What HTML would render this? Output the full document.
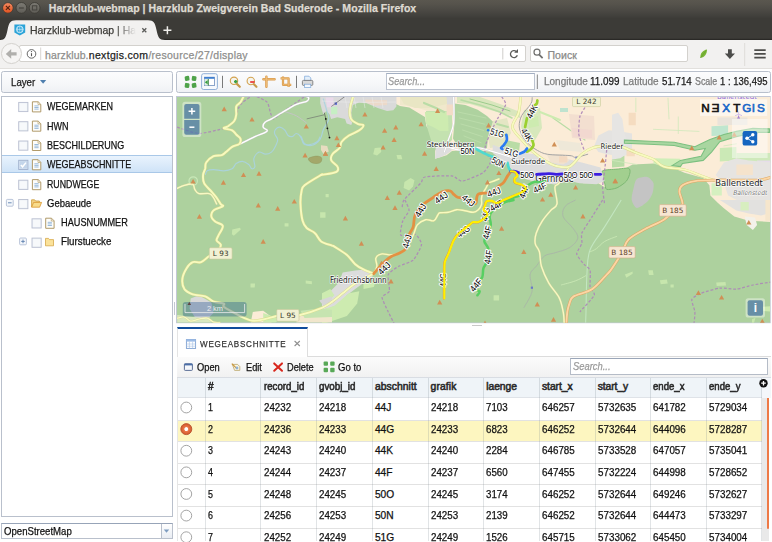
<!DOCTYPE html>
<html lang="en"><head><meta charset="utf-8"><title>Harzklub-webmap | Harzklub Zweigverein Bad Suderode</title>
<style>
*{box-sizing:border-box;margin:0;padding:0}
html,body{width:772px;height:542px;overflow:hidden;background:#fff;font-family:"Liberation Sans",sans-serif}
#root{position:relative;width:772px;height:542px;overflow:hidden;background:#fff}
.a{position:absolute}
.t{position:absolute;white-space:pre;-webkit-text-stroke:0.25px currentColor}
svg{position:absolute;left:0;top:0}
</style></head>
<body><div id="root">
<div class="a" style="left:0;top:0;width:772px;height:40px;background:linear-gradient(#5a574f 0px,#56534c 4px,#4b4944 10.5px,#403f3b 16.5px,#3c3b37 18.5px,#3c3b37 38.2px,#2a2926 39.3px,#2a2926 40px)"></div>
<svg width="772" height="70" viewBox="0 0 772 70">
<defs>
<linearGradient id="gc" x1="0" y1="0" x2="0" y2="1"><stop offset="0" stop-color="#f58b62"/><stop offset="1" stop-color="#e2521f"/></linearGradient>
<linearGradient id="gg" x1="0" y1="0" x2="0" y2="1"><stop offset="0" stop-color="#7d7b74"/><stop offset="1" stop-color="#5e5c56"/></linearGradient>
</defs>
<circle cx="7.9" cy="7.9" r="5.3" fill="url(#gc)" stroke="#3a3832" stroke-width="0.8"/>
<path d="M5.9 5.9 L9.9 9.9 M9.9 5.9 L5.9 9.9" stroke="#5a2410" stroke-width="1.2" fill="none"/>
<circle cx="21.4" cy="7.9" r="5.4" fill="url(#gg)" stroke="#3a3832" stroke-width="0.8"/>
<path d="M19 8 H23.8" stroke="#45433e" stroke-width="1.2"/>
<circle cx="34.6" cy="7.9" r="5.4" fill="url(#gg)" stroke="#3a3832" stroke-width="0.8"/>
<rect x="32.4" y="5.8" width="4.4" height="4.2" fill="none" stroke="#45433e" stroke-width="1"/>
<!-- active tab -->
<path d="M0 40 C5 40 6 37 7.5 30 C9 23 10 20.3 16 20.3 L148 20.3 C154 20.3 155 23 156.5 30 C158 37 159 40 165 40 Z" fill="#f2f1f0"/>
<!-- favicon -->
<path d="M14.4 24.6 H25.2 V32.6 L19.8 35.4 L14.4 32.6 Z" fill="#2aa3d8"/>
<circle cx="19.8" cy="29.4" r="3.4" fill="none" stroke="#d9f0fb" stroke-width="0.8"/>
<path d="M16.4 29.4 H23.2 M19.8 26 V32.8 M18 26.6 Q16.6 29.4 18 32.2 M21.6 26.6 Q23 29.4 21.6 32.2" fill="none" stroke="#d9f0fb" stroke-width="0.6"/>
<!-- tab close -->
<path d="M142.3 28.3 L146.3 32.3 M146.3 28.3 L142.3 32.3" stroke="#5c5c5a" stroke-width="1.3" fill="none"/>
<!-- new tab plus -->
<path d="M163.4 30.3 H171.4 M167.4 26.3 V34.3" stroke="#f0efec" stroke-width="1.5" fill="none"/>
</svg>
<div class="a" style="left:0;top:40px;width:772px;height:29px;background:#f2f1f0;border-bottom:1px solid #e2e0dd"></div>
<div class="a" style="left:19px;top:45px;width:507px;height:17px;background:#fff;border:1px solid #d3d1cd;border-radius:2px"></div>
<div class="a" style="left:0.8px;top:43.2px;width:20.8px;height:20.8px;background:#f6f5f4;border:1px solid #d3d1cd;border-radius:50%"></div>
<div class="a" style="left:530px;top:45px;width:158px;height:17px;background:#fff;border:1px solid #d3d1cd;border-radius:2px"></div>
<svg width="772" height="70" viewBox="0 0 772 70">
<!-- back arrow -->
<path d="M5.8 53.9 L11.2 49 V52.2 H16.6 V55.6 H11.2 V58.8 Z" fill="#b0afac"/>
<!-- info -->
<circle cx="31.5" cy="53.9" r="4.3" fill="none" stroke="#555" stroke-width="0.9"/>
<path d="M31.5 53.2 V56.2" stroke="#555" stroke-width="1.1"/><circle cx="31.5" cy="51.6" r="0.65" fill="#555"/>
<path d="M40.7 47.5 V60" stroke="#d8d6d2" stroke-width="1"/>
<path d="M502.8 48 V59.5" stroke="#cfcdca" stroke-width="1"/>
<!-- reload -->
<path d="M516.4 51.6 A3.5 3.5 0 1 0 517.3 55.2" fill="none" stroke="#5a5a58" stroke-width="1.3"/>
<path d="M514.2 52.8 H518 V49 Z" fill="#5a5a58"/>
<!-- magnifier -->
<circle cx="537" cy="52.2" r="3" fill="none" stroke="#6f6f6d" stroke-width="1.2"/>
<path d="M539.2 54.6 L542.6 58.2" stroke="#6f6f6d" stroke-width="1.7"/>
<!-- leaf -->
<path d="M700.4 58 C700 53 703 50 707 49.4 C707 53.6 705 57 700.4 58 Z" fill="#7ab536"/>
<path d="M700.4 58 L706 50.6" stroke="#5f9a28" stroke-width="0.5"/>
<!-- download -->
<path d="M728 49.2 H731.8 V53.4 H735 L729.9 59 L724.8 53.4 H728 Z" fill="#4c4c4a"/>
<path d="M744.7 43 V66" stroke="#dedcd9" stroke-width="1"/>
<!-- hamburger -->
<path d="M754.3 50.2 H765.7 M754.3 53.9 H765.7 M754.3 57.6 H765.7" stroke="#4c4c4a" stroke-width="1.7"/>
</svg>
<span class="t" style="left:48.80px;top:1.30px;font-size:10.5px;line-height:14px;font-weight:700;color:#dfdbd2;font-style:normal;letter-spacing:0.066px;">Harzklub-webmap | Harzklub Zweigverein Bad Suderode - Mozilla Firefox</span>
<span class="t" style="left:30.00px;top:23.30px;font-size:10.5px;line-height:14px;font-weight:400;color:#3c3b37;font-style:normal;letter-spacing:-0.030px;width:107px;overflow:hidden;-webkit-mask-image:linear-gradient(90deg,#000 85px,transparent 106px);mask-image:linear-gradient(90deg,#000 85px,transparent 106px);">Harzklub-webmap | Ha</span>
<span class="t" style="left:45.10px;top:47.50px;font-size:10.5px;line-height:14px;font-weight:400;color:#8e8e8c;font-style:normal;letter-spacing:0.099px;">harzklub.</span>
<span class="t" style="left:88.80px;top:47.50px;font-size:10.5px;line-height:14px;font-weight:400;color:#1e1e1e;font-style:normal;letter-spacing:0.315px;">nextgis.com</span>
<span class="t" style="left:148.40px;top:47.50px;font-size:10.5px;line-height:14px;font-weight:400;color:#8e8e8c;font-style:normal;letter-spacing:0.277px;">/resource/27/display</span>
<span class="t" style="left:547.40px;top:47.50px;font-size:10.5px;line-height:14px;font-weight:400;color:#8a8a88;font-style:normal;letter-spacing:0.098px;">Поиск</span>
<div class="a" style="left:1px;top:71px;width:172px;height:21.5px;border:1px solid #b9c0cc;border-radius:2.5px;background:linear-gradient(#fcfcfd,#f6f7f9 60%,#eff1f5)"></div>
<svg width="772" height="542" viewBox="0 0 772 542"><path d="M40 80 H46.2 L43.1 83.8 Z" fill="#4f7fae"/></svg>
<div class="a" style="left:176px;top:71px;width:594.5px;height:21.5px;border:1px solid #b9c0cc;border-radius:2.5px;background:linear-gradient(#fcfcfd,#f6f7f9 60%,#eff1f5)"></div>
<svg width="772" height="542" viewBox="0 0 772 542">
<!-- four green squares -->
<g fill="#4fa34a"><rect x="184.8" y="76" width="4.6" height="4.8" rx="1.2" transform="rotate(-8 187 78.4)"/><rect x="191.8" y="76" width="4.6" height="4.8" rx="1.2" transform="rotate(8 194 78.4)"/><rect x="184.8" y="83" width="4.6" height="4.8" rx="1.2" transform="rotate(8 187 85.4)"/><rect x="191.8" y="83" width="4.6" height="4.8" rx="1.2" transform="rotate(-8 194 85.4)"/></g>
<!-- toggle button -->
<rect x="201.6" y="73.7" width="15.8" height="15.8" rx="2" fill="#f6f9fd" stroke="#86a8d4" stroke-width="0.9"/>
<rect x="204.4" y="77.2" width="10" height="8.4" fill="#fff" stroke="#6f8fbf" stroke-width="0.8"/>
<rect x="204.4" y="77" width="10" height="1.8" fill="#3f7fd0"/>
<rect x="204.6" y="79" width="3.6" height="6.4" fill="#dfeede"/>
<path d="M208.3 79 V85.6" stroke="#2d7d32" stroke-width="0.9"/>
<path d="M204.8 82.2 L207.6 80.2 V84.2 Z" fill="#2f9a3a"/>
<path d="M222.5 75.8 V88" stroke="#6b6b6b" stroke-width="0.9"/>
<!-- zoom in -->
<path d="M236.6 83.6 L239.8 86.8" stroke="#c89a4c" stroke-width="2.2" stroke-linecap="round"/>
<circle cx="234" cy="80.8" r="3.7" fill="#f4f4ee" stroke="#d3a24e" stroke-width="1.1"/>
<path d="M234 81.6 H237.4 M235.7 79.9 V83.3" stroke="#3aa044" stroke-width="1.6"/>
<!-- zoom out -->
<path d="M253.4 83.8 L256.4 86.8" stroke="#c89a4c" stroke-width="2.2" stroke-linecap="round"/>
<circle cx="250.8" cy="81" r="3.7" fill="#f4f4ee" stroke="#d3a24e" stroke-width="1.1"/>
<path d="M250.2 82 H254.6" stroke="#e83535" stroke-width="1.7"/>
<!-- measure -->
<path d="M263.4 79.2 H274.6 M266.4 76.6 V86.8" stroke="#d99a4a" stroke-width="2.4" stroke-linecap="round" fill="none"/>
<path d="M263.4 79.2 H274.6 M266.4 76.6 V86.8" stroke="#f0bf7a" stroke-width="1" stroke-linecap="round" fill="none"/>
<!-- crop -->
<path d="M280.6 78.4 H288.6 V87 M283 76.6 V84.8 H291.2" stroke="#d99a4a" stroke-width="2.2" fill="none" stroke-linejoin="round"/>
<path d="M280.6 78.4 H288.6 V87 M283 76.6 V84.8 H291.2" stroke="#f0bf7a" stroke-width="0.8" fill="none"/>
<path d="M296.5 75.8 V88" stroke="#6b6b6b" stroke-width="0.9"/>
<!-- printer -->
<path d="M304.6 76.2 H309 L310.8 78 V81 H304.6 Z" fill="#e3effb" stroke="#7aa5d8" stroke-width="0.7"/>
<rect x="302.4" y="80.4" width="10.4" height="5" rx="1" fill="#d9d9d9" stroke="#6e6e6e" stroke-width="0.8"/>
<rect x="304.4" y="84.2" width="6.4" height="3.4" fill="#f4f8fd" stroke="#7aa5d8" stroke-width="0.7"/>
<path d="M537.4 74.5 V89" stroke="#9a9a9a" stroke-width="1.2"/>
</svg>
<div class="a" style="left:385.5px;top:72.5px;width:149.5px;height:17px;border:1px solid #bcc3cf;border-top-color:#a3afc2;background:#fff"></div>
<div class="a" style="left:1px;top:96px;width:172px;height:421px;border:1px solid #b9c0cc;background:#fff"></div>
<div class="a" style="left:2px;top:155px;width:170px;height:18.3px;background:linear-gradient(#e9f3fd,#cfe3f7);border-top:1px solid #a9c8e8;border-bottom:1px solid #a9c8e8"></div>
<svg width="772" height="542" viewBox="0 0 772 542">
<g transform="translate(18.2,101.89999999999999)"><rect x="0.5" y="0.5" width="9.2" height="9.2" fill="#eef2f7" stroke="#b9bfd0" stroke-width="0.9"/><rect x="1.6" y="1.6" width="7" height="7" fill="#f7f9fb"/></g>
<g transform="translate(31.8,101.3)"><path d="M0.6 0.5 H6.4 L9 3.1 V10.6 H0.6 Z" fill="#fdfdfb" stroke="#a8905a" stroke-width="0.9"/><path d="M6.2 0.6 V3.3 H8.9" fill="none" stroke="#b8a06a" stroke-width="0.7"/><path d="M2.6 4.6 H6.8 M2.6 6.2 H6.8 M2.6 7.8 H6.8" stroke="#8fb2d6" stroke-width="0.9"/></g>
<g transform="translate(18.2,121.19999999999999)"><rect x="0.5" y="0.5" width="9.2" height="9.2" fill="#eef2f7" stroke="#b9bfd0" stroke-width="0.9"/><rect x="1.6" y="1.6" width="7" height="7" fill="#f7f9fb"/></g>
<g transform="translate(31.8,120.6)"><path d="M0.6 0.5 H6.4 L9 3.1 V10.6 H0.6 Z" fill="#fdfdfb" stroke="#a8905a" stroke-width="0.9"/><path d="M6.2 0.6 V3.3 H8.9" fill="none" stroke="#b8a06a" stroke-width="0.7"/><path d="M2.6 4.6 H6.8 M2.6 6.2 H6.8 M2.6 7.8 H6.8" stroke="#8fb2d6" stroke-width="0.9"/></g>
<g transform="translate(18.2,140.5)"><rect x="0.5" y="0.5" width="9.2" height="9.2" fill="#eef2f7" stroke="#b9bfd0" stroke-width="0.9"/><rect x="1.6" y="1.6" width="7" height="7" fill="#f7f9fb"/></g>
<g transform="translate(31.8,139.9)"><path d="M0.6 0.5 H6.4 L9 3.1 V10.6 H0.6 Z" fill="#fdfdfb" stroke="#a8905a" stroke-width="0.9"/><path d="M6.2 0.6 V3.3 H8.9" fill="none" stroke="#b8a06a" stroke-width="0.7"/><path d="M2.6 4.6 H6.8 M2.6 6.2 H6.8 M2.6 7.8 H6.8" stroke="#8fb2d6" stroke-width="0.9"/></g>
<g transform="translate(18.2,159.8)"><rect x="0.5" y="0.5" width="9.2" height="9.2" fill="#dfe9f5" stroke="#9fb0cc" stroke-width="0.9"/><rect x="1.4" y="1.4" width="7.4" height="7.4" fill="#c3d5ea"/><path d="M2.6 5.2 L4.4 7 L7.8 2.8" fill="none" stroke="#fff" stroke-width="1.5"/></g>
<g transform="translate(31.8,159.20000000000002)"><path d="M0.6 0.5 H6.4 L9 3.1 V10.6 H0.6 Z" fill="#fdfdfb" stroke="#a8905a" stroke-width="0.9"/><path d="M6.2 0.6 V3.3 H8.9" fill="none" stroke="#b8a06a" stroke-width="0.7"/><path d="M2.6 4.6 H6.8 M2.6 6.2 H6.8 M2.6 7.8 H6.8" stroke="#8fb2d6" stroke-width="0.9"/></g>
<g transform="translate(18.2,179.7)"><rect x="0.5" y="0.5" width="9.2" height="9.2" fill="#eef2f7" stroke="#b9bfd0" stroke-width="0.9"/><rect x="1.6" y="1.6" width="7" height="7" fill="#f7f9fb"/></g>
<g transform="translate(31.8,179.1)"><path d="M0.6 0.5 H6.4 L9 3.1 V10.6 H0.6 Z" fill="#fdfdfb" stroke="#a8905a" stroke-width="0.9"/><path d="M6.2 0.6 V3.3 H8.9" fill="none" stroke="#b8a06a" stroke-width="0.7"/><path d="M2.6 4.6 H6.8 M2.6 6.2 H6.8 M2.6 7.8 H6.8" stroke="#8fb2d6" stroke-width="0.9"/></g>
<g transform="translate(18.2,199.0)"><rect x="0.5" y="0.5" width="9.2" height="9.2" fill="#eef2f7" stroke="#b9bfd0" stroke-width="0.9"/><rect x="1.6" y="1.6" width="7" height="7" fill="#f7f9fb"/></g>
<g transform="translate(31.0,198.4)"><path d="M0.6 8.6 V1.4 H3.6 L4.6 2.6 H8.4 V4" fill="#f3d48a" stroke="#c99a3a" stroke-width="0.8"/><path d="M0.6 8.8 L2.6 4 H10.6 L8.6 8.8 Z" fill="#f8dc8c" stroke="#d9962e" stroke-width="0.8"/></g>
<rect x="6.4" y="199.40" width="6.8" height="6.8" rx="1" fill="#f4f7fb" stroke="#aab8d0" stroke-width="0.8"/><path d="M8 202.80 H11.6" stroke="#5b7fae" stroke-width="0.9"/>
<g transform="translate(31.5,218.3)"><rect x="0.5" y="0.5" width="9.2" height="9.2" fill="#eef2f7" stroke="#b9bfd0" stroke-width="0.9"/><rect x="1.6" y="1.6" width="7" height="7" fill="#f7f9fb"/></g>
<g transform="translate(45.1,217.70000000000002)"><path d="M0.6 0.5 H6.4 L9 3.1 V10.6 H0.6 Z" fill="#fdfdfb" stroke="#a8905a" stroke-width="0.9"/><path d="M6.2 0.6 V3.3 H8.9" fill="none" stroke="#b8a06a" stroke-width="0.7"/><path d="M2.6 4.6 H6.8 M2.6 6.2 H6.8 M2.6 7.8 H6.8" stroke="#8fb2d6" stroke-width="0.9"/></g>
<g transform="translate(31.5,237.6)"><rect x="0.5" y="0.5" width="9.2" height="9.2" fill="#eef2f7" stroke="#b9bfd0" stroke-width="0.9"/><rect x="1.6" y="1.6" width="7" height="7" fill="#f7f9fb"/></g>
<g transform="translate(44.900000000000006,237.2)"><path d="M0.6 8.6 V1.2 H3.6 L4.6 2.4 H8.6 V8.6 Z" fill="#fbe29a" stroke="#d5a84a" stroke-width="0.8" stroke-linejoin="round"/></g>
<rect x="19.6" y="238.00" width="6.8" height="6.8" rx="1" fill="#f4f7fb" stroke="#aab8d0" stroke-width="0.8"/><path d="M21.2 241.40 H24.8 M23 239.60 V243.20" stroke="#5b7fae" stroke-width="0.9"/>
</svg>
<div class="a" style="left:174px;top:302px;width:1px;height:13px;background:#c3c8d2"></div>
<div class="a" style="left:1px;top:523px;width:172px;height:15.6px;border:1px solid #b9c0cc;border-top-color:#97a4b8;background:#fff"></div>
<div class="a" style="left:160.5px;top:524px;width:11.5px;height:13.6px;border-left:1px solid #b9c0cc;background:linear-gradient(#fff,#e9edf3)"></div>
<svg width="772" height="542" viewBox="0 0 772 542"><path d="M163.8 529.6 H169.2 L166.5 532.8 Z" fill="#7d9cc0"/></svg>
<span class="t" style="left:10.80px;top:74.80px;font-size:10.5px;line-height:14px;font-weight:400;color:#1a1a1a;font-style:normal;transform:scaleX(0.9214);transform-origin:0 50%;">Layer</span>
<span class="t" style="left:388.40px;top:74.20px;font-size:10.5px;line-height:14px;font-weight:400;color:#9a9a9a;font-style:italic;transform:scaleX(0.8803);transform-origin:0 50%;">Search...</span>
<span class="t" style="left:544.00px;top:74.30px;font-size:10.5px;line-height:14px;font-weight:400;color:#7a7a7a;font-style:normal;transform:scaleX(0.9493);transform-origin:0 50%;">Longitude</span>
<span class="t" style="left:590.30px;top:74.30px;font-size:10.5px;line-height:14px;font-weight:400;color:#1a1a1a;font-style:normal;transform:scaleX(0.9412);transform-origin:0 50%;">11.099</span>
<span class="t" style="left:623.10px;top:74.30px;font-size:10.5px;line-height:14px;font-weight:400;color:#7a7a7a;font-style:normal;transform:scaleX(0.9552);transform-origin:0 50%;">Latitude</span>
<span class="t" style="left:661.90px;top:74.30px;font-size:10.5px;line-height:14px;font-weight:400;color:#1a1a1a;font-style:normal;transform:scaleX(0.9276);transform-origin:0 50%;">51.714</span>
<span class="t" style="left:694.70px;top:74.30px;font-size:10.5px;line-height:14px;font-weight:400;color:#7a7a7a;font-style:normal;transform:scaleX(0.8452);transform-origin:0 50%;">Scale</span>
<span class="t" style="left:719.80px;top:74.30px;font-size:10.5px;line-height:14px;font-weight:400;color:#1a1a1a;font-style:normal;transform:scaleX(0.9040);transform-origin:0 50%;">1 : 136,495</span>
<span class="t" style="left:47.10px;top:99.30px;font-size:10.5px;line-height:14px;font-weight:400;color:#111;font-style:normal;transform:scaleX(0.8557);transform-origin:0 50%;">WEGEMARKEN</span>
<span class="t" style="left:47.10px;top:118.60px;font-size:10.5px;line-height:14px;font-weight:400;color:#111;font-style:normal;transform:scaleX(0.8573);transform-origin:0 50%;">HWN</span>
<span class="t" style="left:47.10px;top:137.90px;font-size:10.5px;line-height:14px;font-weight:400;color:#111;font-style:normal;transform:scaleX(0.8547);transform-origin:0 50%;">BESCHILDERUNG</span>
<span class="t" style="left:47.10px;top:157.20px;font-size:10.5px;line-height:14px;font-weight:400;color:#111;font-style:normal;transform:scaleX(0.8550);transform-origin:0 50%;">WEGEABSCHNITTE</span>
<span class="t" style="left:47.10px;top:176.50px;font-size:10.5px;line-height:14px;font-weight:400;color:#111;font-style:normal;transform:scaleX(0.8378);transform-origin:0 50%;">RUNDWEGE</span>
<span class="t" style="left:47.10px;top:195.80px;font-size:10.5px;line-height:14px;font-weight:400;color:#111;font-style:normal;transform:scaleX(0.9032);transform-origin:0 50%;">Gebaeude</span>
<span class="t" style="left:60.70px;top:215.10px;font-size:10.5px;line-height:14px;font-weight:400;color:#111;font-style:normal;transform:scaleX(0.8741);transform-origin:0 50%;">HAUSNUMMER</span>
<span class="t" style="left:60.70px;top:234.40px;font-size:10.5px;line-height:14px;font-weight:400;color:#111;font-style:normal;transform:scaleX(0.9285);transform-origin:0 50%;">Flurstuecke</span>
<span class="t" style="left:3.90px;top:523.70px;font-size:10.5px;line-height:14px;font-weight:400;color:#111;font-style:normal;transform:scaleX(0.9145);transform-origin:0 50%;">OpenStreetMap</span>
<svg width="772" height="542" viewBox="0 0 772 542" font-family="'DejaVu Sans','Liberation Sans',sans-serif">
<defs><clipPath id="mc"><rect x="177" y="97" width="593.2" height="225.7"/></clipPath></defs>
<rect x="176" y="96" width="594.7" height="227.2" fill="#c3c8d6"/>
<g clip-path="url(#mc)">
<rect x="177" y="97" width="593.2" height="225.7" fill="#add19e"/>
<path d="M396.0 95.0 L772.0 95.0 L772.0 222.0 L748.8 220.7 L734.3 216.6 L723.9 208.3 L718.0 203.0 L710.4 195.6 L709.4 185.3 L703.2 178.0 L684.5 172.8 L670.0 166.6 L653.5 163.5 L632.7 164.5 L624.4 168.7 L612.0 172.8 L604.6 187.3 L598.4 183.2 L583.9 183.2 L569.4 181.1 L554.9 184.2 L540.4 183.2 L525.9 179.0 L513.5 170.8 L507.2 164.5 L492.7 152.0 L484.0 151.0 L476.0 149.5 L459.0 150.5 L452.0 151.0 L446.6 155.2 L435.0 158.8 L435.0 151.0 L439.0 145.0 L440.4 138.6 L438.9 132.4 L431.0 132.4 L426.4 126.2 L424.9 116.9 L417.1 112.2 L409.3 107.5 L400.0 106.0 L396.0 104.0 Z" fill="#fbecd7"/>
<path d="M454.5 103.5 L465.3 105.0 L477.7 109.7 L487.0 115.9 L493.3 122.1 L491.0 128.0 L488.0 137.1 L487.0 148.0 L476.2 147.5 L459.0 148.5 L453.0 138.6 L454.5 123.1 Z" fill="#aed29f"/>
<path d="M426.0 111.0 L452.0 111.0 L452.0 140.0 L445.0 147.0 L437.0 148.0 L431.0 140.0 L427.0 127.0 Z" fill="#c4e2b0"/>
<path d="M400.0 97.0 L452.0 97.0 L452.0 111.0 L428.0 111.0 L418.0 108.0 L408.0 106.0 L400.0 105.0 Z" fill="#f0e8cc"/>
<path d="M424.9 112.0 L448.0 112.0 L448.5 131.0 L440.0 131.0 L433.0 127.0 L426.0 124.0 Z" fill="#cdebb0" fill-opacity="1"/>
<path d="M400.0 97.0 L447.0 97.0 L447.0 104.0 L430.0 108.0 L415.0 108.0 L404.0 104.0 Z" fill="#e9e6c4" fill-opacity="1"/>
<path d="M457.0 97.0 L480.0 97.0 L500.0 104.0 L520.0 112.0 L520.0 118.0 L497.0 112.0 L470.0 104.0 L457.0 103.0 Z" fill="#d9e6bd" fill-opacity="1"/>
<path d="M424.0 103.0 L436.0 108.0 L444.0 112.0" fill="none" stroke="#b9dca6" stroke-width="2.2" stroke-opacity="1" stroke-linecap="round"/>
<path d="M461.0 100.0 L480.0 105.0 L500.0 112.0 L512.0 118.0" fill="none" stroke="#b9dca6" stroke-width="1.6" stroke-opacity="1" stroke-linecap="round"/>
<path d="M470.0 99.0 L492.0 105.0 L510.0 111.0" fill="none" stroke="#9ccb8c" stroke-width="1.0" stroke-opacity="1" stroke-linecap="round"/>
<path d="M458.0 112.0 L486.0 118.0" fill="none" stroke="#bfdfae" stroke-width="0.9" stroke-opacity="0.8" stroke-linecap="round"/>
<path d="M459.5 118.0 L484.8 124.2" fill="none" stroke="#bfdfae" stroke-width="0.9" stroke-opacity="0.8" stroke-linecap="round"/>
<path d="M461.0 124.0 L483.6 130.4" fill="none" stroke="#bfdfae" stroke-width="0.9" stroke-opacity="0.8" stroke-linecap="round"/>
<path d="M462.5 130.0 L482.4 136.6" fill="none" stroke="#bfdfae" stroke-width="0.9" stroke-opacity="0.8" stroke-linecap="round"/>
<path d="M464.0 136.0 L481.2 142.8" fill="none" stroke="#bfdfae" stroke-width="0.9" stroke-opacity="0.8" stroke-linecap="round"/>
<path d="M493.0 121.0 L507.0 118.0 L511.0 133.0 L504.0 146.0 L490.0 148.0 L488.0 137.0 Z" fill="#e4e6c4" fill-opacity="1"/>
<path d="M497.0 124.0 L508.0 127.0" fill="none" stroke="#b9dca6" stroke-width="2" stroke-opacity="1" stroke-linecap="round"/>
<path d="M495.0 132.0 L507.0 135.0" fill="none" stroke="#9ccb8c" stroke-width="1.6" stroke-opacity="1" stroke-linecap="round"/>
<path d="M505.0 140.0 L520.0 143.0 L519.0 152.0 L504.0 150.0 Z" fill="#b9dca6" fill-opacity="1"/>
<path d="M524.0 110.0 L540.0 108.0 L542.0 128.0 L534.0 142.0 L524.0 140.0 L521.0 126.0 Z" fill="#d7e8bc" fill-opacity="1"/>
<path d="M528.0 118.0 L538.0 116.0 L539.0 126.0 L529.0 128.0 Z" fill="#cdebb0" fill-opacity="1"/>
<path d="M553.0 118.0 L570.0 130.0 L585.0 140.0" fill="none" stroke="#b9dca6" stroke-width="1.2" stroke-opacity="1" stroke-linecap="round"/>
<path d="M540.0 112.0 L560.0 120.0" fill="none" stroke="#cdebb0" stroke-width="2" stroke-opacity="1" stroke-linecap="round"/>
<path d="M560.0 108.0 L568.0 108.0 L568.0 112.0 L560.0 112.0 Z" fill="#bfe3cf" fill-opacity="1"/>
<path d="M569.0 114.0 L594.0 116.0 L595.0 140.0 L572.0 138.0 Z" fill="#f3dfd0" fill-opacity="1"/>
<path d="M572.0 128.0 L592.0 130.0 L592.0 138.0 L573.0 137.0 Z" fill="#f1d6cf" fill-opacity="0.8"/>
<path d="M556.0 140.0 L580.0 143.0 L582.0 152.0 L560.0 150.0 Z" fill="#eee8d8" fill-opacity="1"/>
<path d="M612.0 154.2 L624.4 155.2 L624.4 166.6 L612.0 167.6 Z" fill="#b9dca6" fill-opacity="1"/>
<path d="M653.5 158.3 L680.4 158.7 L680.4 166.2 L663.8 167.0 L653.5 163.5 Z" fill="#cfeeb8" fill-opacity="1"/>
<path d="M711.5 126.2 L728.1 125.2 L728.1 135.5 L711.5 135.9 Z" fill="#bfe6cf" fill-opacity="1"/>
<path d="M719.8 148.0 L736.4 146.9 L736.4 160.4 L719.8 161.4 Z" fill="#cbe9b6" fill-opacity="1"/>
<path d="M736.4 153.1 L772.0 153.1 L772.0 162.5 L736.4 162.5 Z" fill="#cfe9bb" fill-opacity="1"/>
<path d="M757.1 160.4 L772.0 160.4 L772.0 170.8 L757.1 170.8 Z" fill="#e6dcea" fill-opacity="1"/>
<path d="M628.6 112.7 L635.8 112.7 L635.8 125.2 L628.6 125.2 Z" fill="#f5dcc0" fill-opacity="1"/>
<path d="M635.8 98.2 L635.8 111.7" fill="none" stroke="#cfe9bb" stroke-width="0.8" stroke-opacity="1" stroke-linecap="round"/>
<path d="M668.0 98.2 L669.0 118.9" fill="none" stroke="#cfe9bb" stroke-width="0.8" stroke-opacity="1" stroke-linecap="round"/>
<path d="M678.3 116.9 L678.3 133.5" fill="none" stroke="#cfe9bb" stroke-width="0.8" stroke-opacity="1" stroke-linecap="round"/>
<path d="M653.5 129.3 L699.0 131.4" fill="none" stroke="#cfe9bb" stroke-width="0.8" stroke-opacity="1" stroke-linecap="round"/>
<path d="M612.0 160.4 L636.9 164.5" fill="none" stroke="#cfe9bb" stroke-width="0.8" stroke-opacity="1" stroke-linecap="round"/>
<path d="M723.9 145.9 L736.4 143.8" fill="none" stroke="#cfe9bb" stroke-width="0.8" stroke-opacity="1" stroke-linecap="round"/>
<path d="M602.6 170.8 C604.6 169.7 613.6 169.4 617.1 169.1 C620.5 168.8 626.8 167.8 628.5 168.3 C630.2 168.8 630.2 171.1 629.9 172.8 C629.7 174.5 628.1 179.1 626.4 181.1 C624.7 183.1 619.7 186.6 617.1 187.8 C614.5 188.9 608.4 190.0 606.7 189.4 C605.1 188.8 605.3 184.8 604.6 183.2 C604.0 181.5 602.4 178.6 602.2 177.0 C601.9 175.3 600.6 171.8 602.6 170.8 Z" fill="#a2cf8f" stroke="#7db873" stroke-width="1"/>
<path d="M320.2 96.3 L396.4 96.3 L396.4 106.4 L393.3 110.3 L387.1 111.1 L377.7 108.0 L366.8 103.3 L359.1 102.5 L352.9 104.9 L351.3 112.7 L352.9 120.4 L351.3 125.1 L346.6 123.5 L345.1 118.9 L337.3 117.3 L331.1 118.9 L329.5 114.2 L326.4 111.1 L323.3 114.2 L321.8 109.5 L320.2 103.3 Z" fill="#dadada" fill-opacity="1"/>
<path d="M325.6 97.4 L333.4 97.4 L333.4 107.2 L327.2 107.2 Z" fill="#ead9ea" fill-opacity="1"/>
<path d="M331.1 106.7 L337.3 106.7 L337.3 114.2 L331.1 114.2 Z" fill="#c6efc4" fill-opacity="1"/>
<path d="M365.3 99.4 L387.1 100.2 L387.1 104.9 L374.6 105.7 L365.3 102.5 Z" fill="#f0d8c4" fill-opacity="0.8"/>
<path d="M321.0 145.3 L327.2 146.1 L328.8 151.5 L323.3 153.8 L321.0 150.0 Z" fill="#e8dcc0" fill-opacity="1"/>
<path d="M323.3 98.7 C323.8 100.5 325.5 106.2 326.4 109.5 C327.3 112.9 329.3 115.5 328.8 118.9 C328.2 122.2 324.7 126.4 323.3 129.8 C321.9 133.1 322.0 136.5 320.2 139.1 C318.4 141.7 315.0 144.5 312.4 145.3 C309.8 146.1 306.5 145.0 304.7 143.7 C302.8 142.4 302.3 138.8 301.6 137.5 C300.8 136.2 300.3 136.2 300.0 136.0" fill="none" stroke="#aad3df" stroke-width="1.2" opacity="0.9"/>
<path d="M345.0 97 L347.0 108" stroke="#ececec" stroke-width="0.5"/>
<path d="M354.0 97 L356.0 108" stroke="#ececec" stroke-width="0.5"/>
<path d="M363.0 97 L365.0 108" stroke="#ececec" stroke-width="0.5"/>
<path d="M372.0 97 L374.0 108" stroke="#ececec" stroke-width="0.5"/>
<path d="M381.0 97 L383.0 108" stroke="#ececec" stroke-width="0.5"/>
<path d="M322 101 Q350 103 396 102" stroke="#ececec" stroke-width="0.5" fill="none"/>
<path d="M446.6 96.7 L454.4 96.7 L454.7 110.7 L447.4 110.3 Z" fill="#dcdcdc" fill-opacity="1"/>
<path d="M446.6 104.4 L452.9 104.4 L452.9 115.3 L446.6 115.3 Z" fill="#f3dcc6" fill-opacity="1"/>
<path d="M435.8 145.6 L446.6 144.9 L452.1 146.4 L451.3 151.1 L446.6 154.2 L440.4 157.3 L435.0 158.8 Z" fill="#dedede" fill-opacity="1"/>
<path d="M492.7 144.8 L509.3 151.1 L534.2 154.2 L546.6 161.4 L569.4 159.4 L581.8 162.5 L600.5 167.6 L604.6 181.1 L596.4 184.2 L579.8 183.2 L569.4 181.1 L554.9 184.2 L540.4 183.2 L525.9 179.0 L513.5 170.8 L507.2 164.5 L492.7 153.1 Z" fill="#dddddd" fill-opacity="1"/>
<path d="M546.6 154.2 L563.2 154.2 L569.4 160.4 L563.2 164.5 L550.8 162.5 Z" fill="#f0e2cf" fill-opacity="1"/>
<path d="M559.0 156.2 L567.3 156.2 L567.3 162.5 L559.0 162.5 Z" fill="#f3d9c0" fill-opacity="1"/>
<path d="M598.4 135.5 L608.8 130.3 L621.2 131.4 L632.0 133.5 L632.0 154.2 L621.2 156.2 L606.7 154.2 L598.4 152.1 L594.3 145.9 Z" fill="#e4e3e1" fill-opacity="1"/>
<path d="M612.0 114.8 L618.2 112.7 L622.4 118.9 L624.4 133.5 L626.5 139.7 L626.5 154.2 L620.3 158.3 L612.0 159.4 Z" fill="#e6e5e3" fill-opacity="1"/>
<path d="M626.5 148.0 L634.8 149.0 L634.8 156.2 L626.5 156.2 Z" fill="#f5dcc0" fill-opacity="1"/>
<path d="M624.4 140.1 L649.3 141.3 L674.2 142.2 L694.9 146.7 L709.4 139.7 L723.9 134.5 L736.4 131.4 L752.9 128.3 L769.5 128.9 L769.5 132.4 L755.0 132.4 L736.4 136.6 L719.8 141.7 L711.5 152.1 L703.2 160.4 L682.5 163.5 L680.4 166.6 L672.1 165.6 L680.4 160.4 L701.1 156.2 L705.3 148.4 L694.9 150.2 L674.2 145.5 L649.3 144.2 L624.4 143.2 Z" fill="#a9d6a0" stroke="#7cc080" stroke-width="1.1"/>
<path d="M723.9 162.5 L736.4 158.3 L748.8 160.4 L772.0 162.5 L772.0 203.9 L757.1 203.9 L744.6 203.9 L728.1 195.6 L723.9 183.2 L715.6 174.9 Z" fill="#e6e4e1" fill-opacity="1"/>
<path d="M736.4 164.5 L752.9 164.5 L752.9 174.9 L736.4 174.9 Z" fill="#f5e3cc" fill-opacity="1"/>
<path d="M711.5 183.2 L721.8 183.2 L721.8 195.6 L711.5 195.6 Z" fill="#d5f0c0" fill-opacity="1"/>
<path d="M719.8 200.0 L772.0 200.0 L772.0 212.4 L761.2 215.5 L748.8 213.5 L736.4 210.4 L728.1 205.2 Z" fill="#e2e1df" fill-opacity="1"/>
<path d="M740.5 202.1 L748.8 202.1 L748.8 210.4 L740.5 210.4 Z" fill="#d7eebf" fill-opacity="1"/>
<path d="M765.4 200.0 L772.0 200.0 L772.0 220.7 L765.4 220.7 Z" fill="#f6e6cc" fill-opacity="1"/>
<path d="M744.6 216.6 L755.0 217.6 L757.1 224.9 L752.9 230.1 L746.7 224.9 Z" fill="#f3f1ea" fill-opacity="1"/>
<path d="M636.9 179.0 C638.7 177.7 645.0 176.4 647.2 177.0 C649.4 177.5 652.8 181.0 653.5 183.2 C654.1 185.4 653.2 191.1 652.4 193.6 C651.6 196.0 649.3 199.9 647.2 201.8 C645.2 203.8 638.9 208.3 636.9 208.1 C634.8 207.8 632.1 202.5 631.7 199.8 C631.3 197.0 633.1 190.1 633.8 187.3 C634.5 184.6 635.1 180.4 636.9 179.0 Z" fill="#c4c4c4"/>
<path d="M322.0 299.5 L330.3 291.2 L338.6 282.9 L342.7 272.5 L355.2 270.5 L365.5 269.4 L373.8 272.5 L371.7 278.8 L363.5 282.9 L355.2 289.1 L346.9 295.3 L340.7 303.6 L330.3 307.8 L322.0 309.8 Z" fill="#dcdcdc"/>
<path d="M322.0 293.3 L330.3 289.1 L334.4 295.3 L328.2 301.6 L322.0 303.6 Z" fill="#cdebb0" fill-opacity="1"/>
<path d="M322.0 309.8 L334.4 305.7 L348.9 293.3 L359.3 291.2 L357.2 303.6 L346.9 316.1 L322.0 324.4 Z" fill="#cdebb0" fill-opacity="1"/>
<path d="M363.5 282.9 L375.9 280.8 L373.8 287.0 L363.5 289.1 Z" fill="#cdebb0" fill-opacity="1"/>
<path d="M252.8 311.9 L263.2 310.8 L271.5 317.0 L271.5 322.6 L250.8 322.6 Z" fill="#fbecd7" fill-opacity="1"/>
<path d="M296.4 316.0 L332.0 313.9 L332.0 322.6 L296.4 322.6 Z" fill="#f1e6cc" fill-opacity="1"/>
<path d="M263.2 312.9 L279.8 319.1 L275.6 322.6 L263.2 322.6 Z" fill="#cdebb0" fill-opacity="1"/>
<path d="M300.5 310.8 L317.1 308.8 L332.0 309.8 L332.0 317.0 L304.6 318.1 Z" fill="#c6e4b0" fill-opacity="1"/>
<path d="M177.2 315.0 L192.7 317.0 L209.3 317.0 L211.4 322.6 L177.2 322.6 Z" fill="#d8e8c0" fill-opacity="1"/>
<path d="M190.7 298.4 L198.9 295.3 L211.4 302.5 L213.5 312.9 L207.2 319.1 L194.8 317.0 L189.6 308.8 Z" fill="#d9d9d9" fill-opacity="1"/>
<path d="M319.2 300.5 L331.6 296.3 L332.0 302.5 L323.3 305.6 Z" fill="#d6d6d6" fill-opacity="1"/>
<path d="M374.7 148.1 L380.9 147.6 L381.2 151.9 L377.0 155.4 L373.2 154.3 Z" fill="#cdebb0" fill-opacity="0.8"/>
<path d="M396.5 154.9 L401.2 154.9 L402.3 159.3 L397.6 159.3 Z" fill="#cdebb0" fill-opacity="0.8"/>
<path d="M404.4 181.9 L410.6 178.0 L414.5 180.3 L413.0 186.6 L409.1 190.4 L403.6 188.1 Z" fill="#cdebb0" fill-opacity="0.8"/>
<path d="M232.2 229.6 L240.0 227.8 L240.8 229.6 L233.8 235.8 L231.9 234.3 Z" fill="#cdebb0" fill-opacity="0.8"/>
<path d="M250.5 283.5 L255.1 283.5 L254.7 287.4 L250.5 287.4 Z" fill="#cdebb0" fill-opacity="0.8"/>
<path d="M320.1 212.3 L325.5 212.3 L325.5 217.7 L320.1 217.7 Z" fill="#cdebb0" fill-opacity="0.8"/>
<path d="M284.6 223.3 L288.5 223.3 L288.5 226.4 L284.6 226.4 Z" fill="#cdebb0" fill-opacity="0.8"/>
<path d="M305.7 280.4 L311.9 281.2 L311.9 284.3 L305.7 283.5 Z" fill="#cdebb0" fill-opacity="0.8"/>
<path d="M648.1 270.2 L652.8 270.2 L653.6 274.9 L648.9 274.9 Z" fill="#cdebb0" fill-opacity="0.8"/>
<path d="M659.9 280.3 L666.9 279.5 L667.7 283.4 L660.7 284.2 Z" fill="#cdebb0" fill-opacity="0.8"/>
<path d="M716.2 282.4 L725.5 281.9 L726.0 285.5 L716.7 286.0 Z" fill="#cdebb0" fill-opacity="0.8"/>
<path d="M624.8 274.5 L632.6 271.4 L632.6 273.8 L626.4 277.7 Z" fill="#cdebb0" fill-opacity="0.8"/>
<path d="M670.5 284.5 L673.7 284.5 L673.7 287.6 L670.5 287.6 Z" fill="#cdebb0" fill-opacity="0.8"/>
<path d="M493.6 295.2 L499.1 295.2 L499.1 300.6 L493.6 300.6 Z" fill="#cdebb0" fill-opacity="0.8"/>
<path d="M752.0 319.2 L755.5 317.7 L754.0 323.1 L752.0 323.1 Z" fill="#cdebb0" fill-opacity="0.8"/>
<path d="M325.6 194.1 L328.7 194.1 L328.7 197.2 L325.6 197.2 Z" fill="#cdebb0" fill-opacity="0.8"/>
<path d="M763.0 306.8 L770.2 306.3 L770.2 311.5 L763.5 310.9 Z" fill="#cdebb0" fill-opacity="1"/>
<path d="M308.4 158.7 C308.6 157.8 311.3 157.1 312.9 156.7 C314.6 156.2 316.7 156.0 318.1 156.2 C319.6 156.5 321.2 156.9 321.6 157.9 C322.1 158.9 321.6 161.1 320.8 162.1 C320.0 163.0 318.7 163.4 317.1 163.5 C315.5 163.6 312.7 163.3 311.3 162.5 C309.8 161.7 308.1 159.7 308.4 158.7 Z" fill="#a3a86a" stroke="#8e9458" stroke-width="0.5"/>
<circle cx="193.2" cy="181" r="4.2" fill="none" stroke="#c9e8b8" stroke-width="1.2"/>
<path d="M621.2 200.0 C618.5 204.5 609.8 218.7 604.6 226.9 C599.5 235.2 593.1 242.1 590.1 249.7 C587.2 257.3 587.7 262.2 587.0 272.5 C586.3 282.9 586.2 303.3 586.0 311.9 C585.7 320.6 585.6 322.3 585.6 324.4" fill="none" stroke="#c3e6c0" stroke-width="1.1"/>
<path d="M617.1 236.3 C615.0 237.1 608.1 239.4 604.6 241.5 C601.2 243.5 598.8 247.0 596.4 248.7 C593.9 250.4 591.2 251.3 590.1 251.8" fill="none" stroke="#c9e8b4" stroke-width="0.9"/>
<path d="M561.1 285.0 C563.5 284.3 571.5 282.4 575.6 280.8 C579.8 279.3 584.3 276.5 586.0 275.6" fill="none" stroke="#c9e8b4" stroke-width="0.9"/>
<path d="M575.6 200.0 C573.9 201.0 567.3 203.5 565.3 206.2 C563.2 209.0 561.8 212.8 563.2 216.6 C564.6 220.4 571.1 225.4 573.6 229.0 C576.0 232.6 578.4 235.2 577.7 238.3 C577.0 241.5 573.2 245.3 569.4 247.7 C565.6 250.1 559.0 251.5 554.9 252.8 C550.8 254.2 547.6 253.7 544.5 256.0 C541.4 258.2 538.7 263.2 536.2 266.3 C533.8 269.4 530.7 270.5 530.0 274.6 C529.3 278.8 533.1 285.7 532.1 291.2 C531.1 296.7 525.2 305.0 523.8 307.8" fill="none" stroke="#a9b3a9" stroke-width="0.8"/>
<path d="M532.2 97.3 C532.0 98.4 532.6 100.7 530.9 103.8 C529.2 106.8 523.8 111.8 521.8 115.4 C519.9 119.1 519.2 122.6 519.2 125.8 C519.2 129.0 520.3 131.8 521.8 134.9 C523.3 137.9 525.7 141.3 528.3 143.9 C530.9 146.5 534.1 148.7 537.4 150.4 C540.6 152.1 542.3 153.4 547.7 154.3 C553.2 155.2 565.3 155.1 570.0 155.6 C574.7 156.1 572.6 157.5 575.6 157.3 C578.6 157.1 586.0 154.7 588.1 154.2" fill="none" stroke="#a2a2a2" stroke-width="1"/>
<rect x="575.4" y="156.6" width="2.2" height="2.2" fill="#7a86c8"/>
<rect x="530.8" y="286.6" width="2.2" height="2.2" fill="#6a78c8"/>
<rect x="334.6" y="102.4" width="2.4" height="2.4" fill="#5a68d8"/>
<path d="M324.3 112.7 L325.8 118.9 L327.4 128.3 L329.5 137.6" fill="none" stroke="#444" stroke-width="0.6"/>
<circle cx="325.8" cy="118.9" r="0.9" fill="#111"/>
<circle cx="327.4" cy="128.3" r="0.9" fill="#111"/>
<circle cx="329.5" cy="137.6" r="0.9" fill="#111"/>
<path d="M306.7 118.9 L324.3 114.8" stroke="#666" stroke-width="0.6"/>
<path d="M331.3 106.5 L344.8 96.6" stroke="#555" stroke-width="0.6"/>
<path d="M285.0 111.7 C286.9 112.4 292.7 113.9 296.4 115.8 C300.0 117.7 305.0 121.9 306.7 123.1" fill="none" stroke="#c4c4c4" stroke-width="1"/>
<path d="M205.2 174.9 C205.5 174.2 205.9 171.6 207.2 170.8 C208.6 169.9 210.7 169.7 213.5 169.7 C216.2 169.7 220.7 170.9 223.8 170.8 C226.9 170.6 230.0 169.9 232.1 168.7 C234.2 167.5 234.5 164.7 236.2 163.5 C238.0 162.3 240.4 161.3 242.5 161.4 C244.5 161.6 247.1 163.3 248.7 164.5 C250.2 165.7 250.8 168.3 251.8 168.7 C252.8 169.0 254.6 168.3 254.9 166.6 C255.2 164.9 253.2 160.7 253.9 158.3 C254.6 155.9 257.1 152.8 259.0 152.1 C260.9 151.4 263.2 154.2 265.3 154.2 C267.3 154.2 269.8 153.5 271.5 152.1 C273.2 150.7 274.6 148.0 275.6 145.9 C276.7 143.8 277.9 141.7 277.7 139.7 C277.5 137.6 274.9 135.2 274.6 133.5 C274.2 131.7 274.8 130.3 275.6 129.3 C276.5 128.3 278.2 127.1 279.8 127.2 C281.3 127.4 283.6 129.0 285.0 130.3 C286.3 131.7 286.9 134.5 288.1 135.5 C289.3 136.6 290.8 136.9 292.2 136.6 C293.6 136.2 295.0 133.5 296.4 133.5 C297.7 133.5 299.3 134.8 300.5 136.6 C301.7 138.3 302.2 142.4 303.6 143.8 C305.0 145.2 306.5 145.2 308.8 144.8 C311.0 144.5 315.2 143.1 317.1 141.7 C319.0 140.4 319.7 137.4 320.2 136.6" fill="none" stroke="#aad3df" stroke-width="1.2" opacity="0.9"/>
<path d="M177.2 127.2 C179.4 127.9 194.3 133.3 198.9 133.5 C203.6 133.6 220.3 129.5 223.8 128.3 C227.3 127.0 232.7 123.0 234.2 121.0 C235.6 119.0 237.5 110.4 238.3 108.6 C239.2 106.7 241.2 103.6 242.5 102.4 C243.7 101.2 249.9 97.1 250.8 96.6" fill="none" stroke="#ad86b8" stroke-width="1.25" stroke-dasharray="2.8 1.8" opacity="0.9"/>
<path d="M257.0 96.6 C258.0 97.1 266.0 100.7 267.3 102.4 C268.7 104.0 269.8 111.1 270.4 112.7 C271.1 114.4 272.4 118.9 273.6 118.9 C274.7 118.9 279.6 114.4 281.8 112.7 C284.1 111.1 294.1 104.0 296.4 102.4 C298.6 100.7 303.8 97.1 304.6 96.6" fill="none" stroke="#ad86b8" stroke-width="1.25" stroke-dasharray="2.8 1.8" opacity="0.9"/>
<path d="M501.6 96.6 C502.0 97.3 506.1 102.2 505.7 104.4 C505.3 106.7 498.9 116.2 497.4 118.9 C496.0 121.6 492.3 128.9 491.2 131.4 C490.1 133.9 486.6 141.7 486.0 143.8 C485.4 145.9 484.5 150.4 485.0 152.1 C485.5 153.8 491.4 158.3 491.2 160.4 C491.0 162.5 485.8 170.8 482.9 172.8 C480.0 174.9 465.3 180.8 462.2 181.1 C459.1 181.4 455.5 176.4 451.8 175.9 C448.1 175.5 428.0 176.2 424.9 177.0 C421.8 177.7 422.8 180.9 420.7 183.2 C418.7 185.5 406.0 197.3 404.1 199.8 C402.3 202.3 402.3 207.2 402.1 208.1" fill="none" stroke="#ad86b8" stroke-width="1.25" stroke-dasharray="2.8 1.8" opacity="0.9"/>
<path d="M585.0 107.5 C584.4 108.5 580.4 114.3 579.8 116.9 C579.2 119.5 578.5 130.8 578.7 133.5 C578.9 136.1 581.2 141.9 581.8 143.8 C582.5 145.7 584.6 151.3 585.0 152.1" fill="none" stroke="#ad86b8" stroke-width="1.25" stroke-dasharray="2.8 1.8" opacity="0.9"/>
<path d="M404.9 200.0 C405.3 201.0 409.3 208.3 409.0 210.4 C408.8 212.4 403.7 218.2 402.8 220.7 C402.0 223.2 399.5 233.9 400.8 235.2 C402.0 236.6 413.2 233.3 415.3 234.2 C417.3 235.1 421.7 242.0 421.5 244.6 C421.3 247.2 415.5 257.9 413.2 260.1 C410.9 262.3 401.2 264.9 398.7 266.3 C396.2 267.8 389.3 272.1 388.3 274.6 C387.4 277.1 390.0 288.9 389.4 291.2 C388.7 293.5 382.2 295.3 382.1 297.4 C382.0 299.5 387.1 309.2 388.3 311.9 C389.6 314.6 393.9 323.1 394.5 324.4" fill="none" stroke="#ad86b8" stroke-width="1.25" stroke-dasharray="2.8 1.8" opacity="0.9"/>
<path d="M602.6 200.0 C601.5 201.7 594.3 213.3 592.2 216.6 C590.1 219.9 582.9 230.5 581.8 233.2 C580.8 235.9 582.4 241.5 581.8 243.5 C581.3 245.6 576.5 251.8 576.7 253.9 C576.9 256.0 582.6 262.6 583.9 264.2 C585.3 265.9 589.5 268.2 590.1 270.5 C590.8 272.7 589.7 284.6 590.1 287.0 C590.5 289.5 595.3 292.8 594.3 295.3 C593.2 297.8 581.2 310.3 579.8 311.9" fill="none" stroke="#ad86b8" stroke-width="1.25" stroke-dasharray="2.8 1.8" opacity="0.9"/>
<path d="M772.0 281.9 C770.1 282.2 756.5 284.2 752.9 285.0 C749.4 285.7 739.7 288.8 736.4 289.1 C733.0 289.4 723.3 287.7 719.8 288.1 C716.2 288.5 703.9 292.1 701.1 293.3 C698.3 294.4 692.4 297.6 691.8 299.5 C691.2 301.3 694.7 309.4 694.9 311.9 C695.1 314.4 694.0 323.1 693.9 324.4" fill="none" stroke="#ad86b8" stroke-width="1.25" stroke-dasharray="2.8 1.8" opacity="0.9"/>
<path d="M606.7 150.0 C606.5 152.1 605.1 167.0 604.6 170.8 C604.2 174.5 602.6 184.0 602.6 187.3 C602.6 190.7 604.4 202.3 604.6 203.9" fill="none" stroke="#ad86b8" stroke-width="1.25" stroke-dasharray="2.8 1.8" opacity="0.9"/>
<path d="M240.4 143.8 C242.8 142.6 250.8 138.5 254.9 136.6 C259.0 134.7 263.2 133.5 265.3 132.4 C267.3 131.4 267.7 131.2 267.3 130.3 C267.0 129.5 263.5 128.6 263.2 127.2 C262.8 125.9 263.9 123.4 265.3 122.1 C266.6 120.7 268.7 120.5 271.5 118.9 C274.2 117.4 277.7 115.1 281.8 112.7 C286.0 110.3 292.2 106.3 296.4 104.4 C300.5 102.5 304.6 102.4 306.7 101.3 C308.8 100.3 308.8 99.0 308.8 98.2 C308.8 97.4 307.1 96.8 306.7 96.6" fill="none" stroke="#c9c9c9" stroke-width="2.0" stroke-linecap="round" stroke-linejoin="round"/>
<path d="M240.4 143.8 C242.8 142.6 250.8 138.5 254.9 136.6 C259.0 134.7 263.2 133.5 265.3 132.4 C267.3 131.4 267.7 131.2 267.3 130.3 C267.0 129.5 263.5 128.6 263.2 127.2 C262.8 125.9 263.9 123.4 265.3 122.1 C266.6 120.7 268.7 120.5 271.5 118.9 C274.2 117.4 277.7 115.1 281.8 112.7 C286.0 110.3 292.2 106.3 296.4 104.4 C300.5 102.5 304.6 102.4 306.7 101.3 C308.8 100.3 308.8 99.0 308.8 98.2 C308.8 97.4 307.1 96.8 306.7 96.6" fill="none" stroke="#ffffff" stroke-width="1.3" stroke-linecap="round" stroke-linejoin="round"/>
<path d="M453.6 96.6 C453.6 101.0 454.5 115.9 453.6 123.1 C452.7 130.3 450.0 134.8 448.4 139.7 C446.9 144.5 445.0 150.0 444.3 152.1" fill="none" stroke="#d0d0d0" stroke-width="1.8" stroke-linecap="round" stroke-linejoin="round"/>
<path d="M453.6 96.6 C453.6 101.0 454.5 115.9 453.6 123.1 C452.7 130.3 450.0 134.8 448.4 139.7 C446.9 144.5 445.0 150.0 444.3 152.1" fill="none" stroke="#ffffff" stroke-width="1.1" stroke-linecap="round" stroke-linejoin="round"/>
<path d="M447.7 146.9 C449.7 147.4 455.3 149.9 460.1 150.0 C464.9 150.1 471.5 147.4 476.7 147.5 C481.9 147.7 486.0 149.6 491.2 151.1 C496.4 152.5 503.6 154.7 507.8 156.2 C511.9 157.8 514.7 159.7 516.1 160.4" fill="none" stroke="#d0d0d0" stroke-width="1.8" stroke-linecap="round" stroke-linejoin="round"/>
<path d="M447.7 146.9 C449.7 147.4 455.3 149.9 460.1 150.0 C464.9 150.1 471.5 147.4 476.7 147.5 C481.9 147.7 486.0 149.6 491.2 151.1 C496.4 152.5 503.6 154.7 507.8 156.2 C511.9 157.8 514.7 159.7 516.1 160.4" fill="none" stroke="#ffffff" stroke-width="1.1" stroke-linecap="round" stroke-linejoin="round"/>
<path d="M373.8 273.6 C374.3 272.4 376.6 268.9 376.9 266.3 C377.3 263.7 375.0 260.1 375.9 258.0 C376.7 256.0 379.3 254.4 382.1 253.9 C384.9 253.4 388.7 255.6 392.5 254.9 C396.3 254.2 401.4 253.0 404.9 249.7 C408.4 246.5 411.1 239.4 413.2 235.2 C415.3 231.1 415.3 227.5 417.3 224.9 C419.4 222.3 422.9 220.4 425.6 219.7 C428.4 219.0 431.8 221.6 433.9 220.7 C436.0 219.9 437.0 215.8 438.1 214.5 C439.1 213.2 438.3 213.2 440.0 212.8 C441.7 212.4 445.5 212.8 448.3 212.3 C451.1 211.8 453.8 210.0 456.6 209.7 C459.4 209.4 462.1 210.3 464.9 210.7 C467.7 211.1 471.0 212.5 473.2 212.3 C475.4 212.1 476.9 211.0 478.3 209.7 C479.7 208.4 481.0 206.4 481.5 204.5 C482.0 202.6 481.3 200.0 481.5 198.3 C481.7 196.6 481.8 195.8 482.5 194.1 C483.2 192.4 484.9 189.8 486.0 188.0 C487.1 186.2 487.7 184.2 489.0 183.0 C490.3 181.8 492.3 181.7 494.0 181.0 C495.7 180.3 498.2 179.3 499.0 179.0" fill="none" stroke="#cfd48f" stroke-width="2.2" stroke-linecap="round" stroke-linejoin="round"/>
<path d="M373.8 273.6 C374.3 272.4 376.6 268.9 376.9 266.3 C377.3 263.7 375.0 260.1 375.9 258.0 C376.7 256.0 379.3 254.4 382.1 253.9 C384.9 253.4 388.7 255.6 392.5 254.9 C396.3 254.2 401.4 253.0 404.9 249.7 C408.4 246.5 411.1 239.4 413.2 235.2 C415.3 231.1 415.3 227.5 417.3 224.9 C419.4 222.3 422.9 220.4 425.6 219.7 C428.4 219.0 431.8 221.6 433.9 220.7 C436.0 219.9 437.0 215.8 438.1 214.5 C439.1 213.2 438.3 213.2 440.0 212.8 C441.7 212.4 445.5 212.8 448.3 212.3 C451.1 211.8 453.8 210.0 456.6 209.7 C459.4 209.4 462.1 210.3 464.9 210.7 C467.7 211.1 471.0 212.5 473.2 212.3 C475.4 212.1 476.9 211.0 478.3 209.7 C479.7 208.4 481.0 206.4 481.5 204.5 C482.0 202.6 481.3 200.0 481.5 198.3 C481.7 196.6 481.8 195.8 482.5 194.1 C483.2 192.4 484.9 189.8 486.0 188.0 C487.1 186.2 487.7 184.2 489.0 183.0 C490.3 181.8 492.3 181.7 494.0 181.0 C495.7 180.3 498.2 179.3 499.0 179.0" fill="none" stroke="#f7fabf" stroke-width="1.4" stroke-linecap="round" stroke-linejoin="round"/>
<path d="M569.4 166.6 C567.7 169.4 561.5 179.7 559.0 183.2 C556.6 186.6 555.2 183.9 554.9 187.3 C554.6 190.8 557.7 200.1 557.0 203.9 C556.3 207.8 553.2 207.6 550.8 210.4 C548.3 213.2 544.9 216.9 542.5 220.7 C540.0 224.5 537.5 229.4 536.2 233.2 C535.0 237.0 534.7 240.4 535.2 243.5 C535.7 246.6 538.3 248.0 539.4 251.8 C540.4 255.6 539.9 261.1 541.4 266.3 C543.0 271.5 545.7 277.7 548.7 282.9 C551.6 288.1 556.6 292.6 559.0 297.4 C561.5 302.2 562.3 307.4 563.2 311.9 C564.1 316.4 564.1 322.3 564.2 324.4" fill="none" stroke="#d3d699" stroke-width="2.0" stroke-linecap="round" stroke-linejoin="round"/>
<path d="M569.4 166.6 C567.7 169.4 561.5 179.7 559.0 183.2 C556.6 186.6 555.2 183.9 554.9 187.3 C554.6 190.8 557.7 200.1 557.0 203.9 C556.3 207.8 553.2 207.6 550.8 210.4 C548.3 213.2 544.9 216.9 542.5 220.7 C540.0 224.5 537.5 229.4 536.2 233.2 C535.0 237.0 534.7 240.4 535.2 243.5 C535.7 246.6 538.3 248.0 539.4 251.8 C540.4 255.6 539.9 261.1 541.4 266.3 C543.0 271.5 545.7 277.7 548.7 282.9 C551.6 288.1 556.6 292.6 559.0 297.4 C561.5 302.2 562.3 307.4 563.2 311.9 C564.1 316.4 564.1 322.3 564.2 324.4" fill="none" stroke="#f7f9c4" stroke-width="1.3" stroke-linecap="round" stroke-linejoin="round"/>
<path d="M177.2 188.4 C178.4 187.9 181.8 186.0 184.4 185.3 C187.0 184.6 191.0 183.5 192.7 184.2 C194.5 184.9 193.8 187.9 194.8 189.4 C195.8 191.0 196.5 192.9 198.9 193.6 C201.4 194.2 206.9 192.9 209.3 193.6 C211.7 194.2 212.2 196.0 213.5 197.7 C214.7 199.4 216.0 202.9 216.6 203.9" fill="none" stroke="#d3d699" stroke-width="2.0" stroke-linecap="round" stroke-linejoin="round"/>
<path d="M177.2 188.4 C178.4 187.9 181.8 186.0 184.4 185.3 C187.0 184.6 191.0 183.5 192.7 184.2 C194.5 184.9 193.8 187.9 194.8 189.4 C195.8 191.0 196.5 192.9 198.9 193.6 C201.4 194.2 206.9 192.9 209.3 193.6 C211.7 194.2 212.2 196.0 213.5 197.7 C214.7 199.4 216.0 202.9 216.6 203.9" fill="none" stroke="#f7f9c4" stroke-width="1.3" stroke-linecap="round" stroke-linejoin="round"/>
<path d="M177.2 318.1 C178.4 317.9 182.2 316.5 184.4 317.0 C186.7 317.6 188.2 320.8 190.7 321.2 C193.1 321.5 196.2 319.6 198.9 319.1 C201.7 318.6 204.8 317.6 207.2 318.1 C209.7 318.6 211.4 321.5 213.5 322.2 C215.5 323.0 218.6 322.6 219.7 322.6" fill="none" stroke="#d3d699" stroke-width="2.0" stroke-linecap="round" stroke-linejoin="round"/>
<path d="M177.2 318.1 C178.4 317.9 182.2 316.5 184.4 317.0 C186.7 317.6 188.2 320.8 190.7 321.2 C193.1 321.5 196.2 319.6 198.9 319.1 C201.7 318.6 204.8 317.6 207.2 318.1 C209.7 318.6 211.4 321.5 213.5 322.2 C215.5 323.0 218.6 322.6 219.7 322.6" fill="none" stroke="#f7f9c4" stroke-width="1.3" stroke-linecap="round" stroke-linejoin="round"/>
<path d="M243.5 96.6 C243.0 97.5 241.6 100.7 240.4 102.4 C239.2 104.0 236.9 104.4 236.2 106.5 C235.6 108.6 236.6 112.4 236.2 114.8 C235.9 117.2 235.6 119.1 234.2 121.0 C232.8 122.9 229.7 125.0 228.0 126.2 C226.2 127.4 223.1 127.6 223.8 128.3 C224.5 129.0 230.0 129.3 232.1 130.3 C234.2 131.4 234.9 133.1 236.2 134.5 C237.6 135.9 239.9 137.1 240.4 138.6 C240.9 140.2 240.7 142.4 239.4 143.8 C238.0 145.2 234.3 145.5 232.1 146.9 C229.9 148.3 227.6 150.7 225.9 152.1 C224.2 153.5 223.8 154.5 221.7 155.2 C219.7 155.9 216.0 155.0 213.5 156.2 C210.9 157.5 207.6 160.4 206.2 162.5 C204.8 164.5 205.7 166.6 205.2 168.7 C204.6 170.8 203.3 172.5 203.1 174.9 C202.9 177.3 202.7 180.4 204.1 183.2 C205.5 186.0 209.3 189.1 211.4 191.5 C213.5 193.9 215.0 195.6 216.6 197.7 C218.1 199.8 219.7 202.7 220.7 204.1 C221.7 205.6 224.0 205.2 222.8 206.2 C221.6 207.3 215.4 208.6 213.5 210.4 C211.6 212.1 211.0 214.7 211.4 216.6 C211.7 218.5 213.6 220.2 215.5 221.8 C217.4 223.3 222.3 223.7 222.8 225.9 C223.3 228.2 219.7 232.8 218.6 235.2 C217.6 237.7 216.2 238.9 216.6 240.4 C216.9 242.0 220.4 243.0 220.7 244.6 C221.1 246.1 220.5 247.8 218.6 249.7 C216.7 251.6 212.2 253.9 209.3 256.0 C206.4 258.0 203.8 261.1 201.0 262.2 C198.3 263.2 195.1 261.1 192.7 262.2 C190.3 263.2 188.2 265.6 186.5 268.4 C184.8 271.2 182.7 275.3 182.4 278.8 C182.0 282.2 182.7 286.5 184.4 289.1 C186.2 291.7 189.3 293.1 192.7 294.3 C196.2 295.5 201.7 295.2 205.2 296.4 C208.6 297.6 210.3 300.3 213.5 301.6 C216.6 302.8 222.1 302.8 223.8 303.6 C225.5 304.5 222.1 305.1 223.8 306.7 C225.5 308.2 230.7 311.0 234.2 312.9 C237.6 314.8 241.4 316.8 244.5 318.1 C247.6 319.4 249.7 320.5 252.8 320.8 C255.9 321.0 259.2 320.3 263.2 319.5 C267.2 318.7 272.5 316.8 276.7 316.0 C280.8 315.3 286.2 315.1 288.1 315.0" fill="none" stroke="#d6d88a" stroke-width="2.7" stroke-linecap="round" stroke-linejoin="round"/>
<path d="M243.5 96.6 C243.0 97.5 241.6 100.7 240.4 102.4 C239.2 104.0 236.9 104.4 236.2 106.5 C235.6 108.6 236.6 112.4 236.2 114.8 C235.9 117.2 235.6 119.1 234.2 121.0 C232.8 122.9 229.7 125.0 228.0 126.2 C226.2 127.4 223.1 127.6 223.8 128.3 C224.5 129.0 230.0 129.3 232.1 130.3 C234.2 131.4 234.9 133.1 236.2 134.5 C237.6 135.9 239.9 137.1 240.4 138.6 C240.9 140.2 240.7 142.4 239.4 143.8 C238.0 145.2 234.3 145.5 232.1 146.9 C229.9 148.3 227.6 150.7 225.9 152.1 C224.2 153.5 223.8 154.5 221.7 155.2 C219.7 155.9 216.0 155.0 213.5 156.2 C210.9 157.5 207.6 160.4 206.2 162.5 C204.8 164.5 205.7 166.6 205.2 168.7 C204.6 170.8 203.3 172.5 203.1 174.9 C202.9 177.3 202.7 180.4 204.1 183.2 C205.5 186.0 209.3 189.1 211.4 191.5 C213.5 193.9 215.0 195.6 216.6 197.7 C218.1 199.8 219.7 202.7 220.7 204.1 C221.7 205.6 224.0 205.2 222.8 206.2 C221.6 207.3 215.4 208.6 213.5 210.4 C211.6 212.1 211.0 214.7 211.4 216.6 C211.7 218.5 213.6 220.2 215.5 221.8 C217.4 223.3 222.3 223.7 222.8 225.9 C223.3 228.2 219.7 232.8 218.6 235.2 C217.6 237.7 216.2 238.9 216.6 240.4 C216.9 242.0 220.4 243.0 220.7 244.6 C221.1 246.1 220.5 247.8 218.6 249.7 C216.7 251.6 212.2 253.9 209.3 256.0 C206.4 258.0 203.8 261.1 201.0 262.2 C198.3 263.2 195.1 261.1 192.7 262.2 C190.3 263.2 188.2 265.6 186.5 268.4 C184.8 271.2 182.7 275.3 182.4 278.8 C182.0 282.2 182.7 286.5 184.4 289.1 C186.2 291.7 189.3 293.1 192.7 294.3 C196.2 295.5 201.7 295.2 205.2 296.4 C208.6 297.6 210.3 300.3 213.5 301.6 C216.6 302.8 222.1 302.8 223.8 303.6 C225.5 304.5 222.1 305.1 223.8 306.7 C225.5 308.2 230.7 311.0 234.2 312.9 C237.6 314.8 241.4 316.8 244.5 318.1 C247.6 319.4 249.7 320.5 252.8 320.8 C255.9 321.0 259.2 320.3 263.2 319.5 C267.2 318.7 272.5 316.8 276.7 316.0 C280.8 315.3 286.2 315.1 288.1 315.0" fill="none" stroke="#f7fabf" stroke-width="1.9" stroke-linecap="round" stroke-linejoin="round"/>
<path d="M353.1 96.6 C352.6 98.6 350.3 104.8 350.0 108.6 C349.6 112.3 349.6 116.4 351.0 118.9 C352.4 121.5 356.2 123.1 358.3 124.1 C360.3 125.2 363.3 124.1 363.5 125.2 C363.6 126.2 361.7 128.6 359.3 130.3 C356.9 132.1 351.9 133.6 348.9 135.5 C346.0 137.4 343.2 139.7 341.7 141.7 C340.1 143.8 341.2 145.9 339.6 148.0 C338.1 150.0 333.7 152.1 332.4 154.2 C331.0 156.2 330.5 158.3 331.3 160.4 C332.2 162.5 336.7 164.7 337.5 166.6 C338.4 168.5 339.1 170.4 336.5 171.8 C333.9 173.2 324.5 174.4 322.0 174.9 C319.5 175.4 324.1 173.2 321.2 174.9 C318.3 176.6 307.9 182.5 304.6 185.3 C301.4 188.0 302.2 188.4 301.5 191.5 C300.8 194.6 300.3 199.0 300.5 203.9 C300.7 208.8 301.5 216.7 302.6 220.7 C303.6 224.7 304.6 225.9 306.7 228.0 C308.8 230.1 312.6 230.9 315.0 233.2 C317.4 235.4 318.4 239.4 321.2 241.5 C324.1 243.5 329.8 244.7 332.0 245.6 C334.2 246.5 332.0 245.1 334.4 246.6 C336.9 248.2 343.4 252.0 346.9 254.9 C350.3 257.9 352.4 261.8 355.2 264.2 C357.9 266.7 360.3 267.9 363.5 269.4 C366.6 271.0 372.1 272.9 373.8 273.6" fill="none" stroke="#d6d88a" stroke-width="2.7" stroke-linecap="round" stroke-linejoin="round"/>
<path d="M353.1 96.6 C352.6 98.6 350.3 104.8 350.0 108.6 C349.6 112.3 349.6 116.4 351.0 118.9 C352.4 121.5 356.2 123.1 358.3 124.1 C360.3 125.2 363.3 124.1 363.5 125.2 C363.6 126.2 361.7 128.6 359.3 130.3 C356.9 132.1 351.9 133.6 348.9 135.5 C346.0 137.4 343.2 139.7 341.7 141.7 C340.1 143.8 341.2 145.9 339.6 148.0 C338.1 150.0 333.7 152.1 332.4 154.2 C331.0 156.2 330.5 158.3 331.3 160.4 C332.2 162.5 336.7 164.7 337.5 166.6 C338.4 168.5 339.1 170.4 336.5 171.8 C333.9 173.2 324.5 174.4 322.0 174.9 C319.5 175.4 324.1 173.2 321.2 174.9 C318.3 176.6 307.9 182.5 304.6 185.3 C301.4 188.0 302.2 188.4 301.5 191.5 C300.8 194.6 300.3 199.0 300.5 203.9 C300.7 208.8 301.5 216.7 302.6 220.7 C303.6 224.7 304.6 225.9 306.7 228.0 C308.8 230.1 312.6 230.9 315.0 233.2 C317.4 235.4 318.4 239.4 321.2 241.5 C324.1 243.5 329.8 244.7 332.0 245.6 C334.2 246.5 332.0 245.1 334.4 246.6 C336.9 248.2 343.4 252.0 346.9 254.9 C350.3 257.9 352.4 261.8 355.2 264.2 C357.9 266.7 360.3 267.9 363.5 269.4 C366.6 271.0 372.1 272.9 373.8 273.6" fill="none" stroke="#f7fabf" stroke-width="1.9" stroke-linecap="round" stroke-linejoin="round"/>
<path d="M373.8 273.6 C372.1 274.4 366.9 276.9 363.5 278.8 C360.0 280.7 356.5 282.6 353.1 285.0 C349.6 287.4 346.2 290.5 342.7 293.3 C339.3 296.0 335.8 299.1 332.4 301.6 C328.9 304.0 327.4 305.5 322.0 307.8 C316.6 310.0 305.3 313.7 300.0 315.0 C294.7 316.3 291.7 315.4 290.0 315.5" fill="none" stroke="#d6d88a" stroke-width="2.7" stroke-linecap="round" stroke-linejoin="round"/>
<path d="M373.8 273.6 C372.1 274.4 366.9 276.9 363.5 278.8 C360.0 280.7 356.5 282.6 353.1 285.0 C349.6 287.4 346.2 290.5 342.7 293.3 C339.3 296.0 335.8 299.1 332.4 301.6 C328.9 304.0 327.4 305.5 322.0 307.8 C316.6 310.0 305.3 313.7 300.0 315.0 C294.7 316.3 291.7 315.4 290.0 315.5" fill="none" stroke="#f7fabf" stroke-width="1.9" stroke-linecap="round" stroke-linejoin="round"/>
<path d="M520.7 96.6 C520.4 99.3 520.0 107.6 518.6 112.7 C517.3 117.8 511.9 122.7 512.4 127.2 C512.9 131.7 518.5 135.7 521.7 139.7 C525.0 143.6 528.3 147.6 532.1 151.1 C535.9 154.5 540.7 158.0 544.5 160.4 C548.3 162.8 550.8 164.5 554.9 165.6 C559.0 166.6 564.9 168.5 569.4 166.6 C573.9 164.7 578.0 157.3 581.8 154.2 C585.6 151.1 588.4 149.3 592.2 148.0 C596.0 146.6 600.5 146.1 604.6 145.9 C608.8 145.7 614.1 146.7 617.1 146.9 C620.0 147.1 619.1 145.9 622.4 146.9 C625.7 148.0 631.7 151.1 636.9 153.1 C642.1 155.2 649.0 157.1 653.5 159.4 C657.9 161.6 658.6 164.9 663.8 166.6 C669.0 168.3 678.7 168.3 684.5 169.7 C690.4 171.1 693.9 173.0 699.0 174.9 C704.2 176.8 712.9 180.1 715.6 181.1" fill="none" stroke="#d6d88a" stroke-width="2.7" stroke-linecap="round" stroke-linejoin="round"/>
<path d="M520.7 96.6 C520.4 99.3 520.0 107.6 518.6 112.7 C517.3 117.8 511.9 122.7 512.4 127.2 C512.9 131.7 518.5 135.7 521.7 139.7 C525.0 143.6 528.3 147.6 532.1 151.1 C535.9 154.5 540.7 158.0 544.5 160.4 C548.3 162.8 550.8 164.5 554.9 165.6 C559.0 166.6 564.9 168.5 569.4 166.6 C573.9 164.7 578.0 157.3 581.8 154.2 C585.6 151.1 588.4 149.3 592.2 148.0 C596.0 146.6 600.5 146.1 604.6 145.9 C608.8 145.7 614.1 146.7 617.1 146.9 C620.0 147.1 619.1 145.9 622.4 146.9 C625.7 148.0 631.7 151.1 636.9 153.1 C642.1 155.2 649.0 157.1 653.5 159.4 C657.9 161.6 658.6 164.9 663.8 166.6 C669.0 168.3 678.7 168.3 684.5 169.7 C690.4 171.1 693.9 173.0 699.0 174.9 C704.2 176.8 712.9 180.1 715.6 181.1" fill="none" stroke="#f7fabf" stroke-width="1.9" stroke-linecap="round" stroke-linejoin="round"/>
<path d="M772.0 177.0 C769.5 177.5 766.5 179.6 757.1 180.1 C747.7 180.6 726.0 179.9 715.6 180.1 C705.3 180.3 700.4 180.3 694.9 181.1 C689.4 182.0 685.1 183.5 682.5 185.3 C679.9 187.0 679.4 188.4 679.4 191.5 C679.4 194.6 683.0 201.1 682.5 203.9 C681.9 206.7 679.4 205.7 676.2 208.3 C673.1 210.9 669.0 216.2 663.8 219.7 C658.6 223.1 651.0 225.7 645.2 229.0 C639.3 232.3 632.4 235.6 628.6 239.4 C624.8 243.2 625.1 247.0 622.4 251.8 C619.6 256.6 614.6 264.6 612.0 268.4 C609.4 272.2 610.0 271.2 606.7 274.6 C603.4 278.1 597.7 285.5 592.2 289.1 C586.7 292.7 577.4 294.0 573.6 296.4 C569.8 298.8 570.4 301.0 569.4 303.6 C568.4 306.2 567.9 308.5 567.3 311.9 C566.8 315.4 566.5 322.3 566.3 324.4" fill="none" stroke="#d9a766" stroke-width="2.9" stroke-linecap="round" stroke-linejoin="round"/>
<path d="M772.0 177.0 C769.5 177.5 766.5 179.6 757.1 180.1 C747.7 180.6 726.0 179.9 715.6 180.1 C705.3 180.3 700.4 180.3 694.9 181.1 C689.4 182.0 685.1 183.5 682.5 185.3 C679.9 187.0 679.4 188.4 679.4 191.5 C679.4 194.6 683.0 201.1 682.5 203.9 C681.9 206.7 679.4 205.7 676.2 208.3 C673.1 210.9 669.0 216.2 663.8 219.7 C658.6 223.1 651.0 225.7 645.2 229.0 C639.3 232.3 632.4 235.6 628.6 239.4 C624.8 243.2 625.1 247.0 622.4 251.8 C619.6 256.6 614.6 264.6 612.0 268.4 C609.4 272.2 610.0 271.2 606.7 274.6 C603.4 278.1 597.7 285.5 592.2 289.1 C586.7 292.7 577.4 294.0 573.6 296.4 C569.8 298.8 570.4 301.0 569.4 303.6 C568.4 306.2 567.9 308.5 567.3 311.9 C566.8 315.4 566.5 322.3 566.3 324.4" fill="none" stroke="#fcd6a4" stroke-width="1.9" stroke-linecap="round" stroke-linejoin="round"/>
<path d="M221.6 111.2 L224.2 106.5 L226.8 111.2 Z" fill="#d08f55"/>
<path d="M249.4 121.6 L252.0 116.9 L254.6 121.6 Z" fill="#d08f55"/>
<path d="M303.7 128.6 L306.3 123.9 L308.9 128.6 Z" fill="#d08f55"/>
<path d="M302.5 157.4 L305.1 152.7 L307.7 157.4 Z" fill="#d08f55"/>
<path d="M322.8 155.8 L325.4 151.1 L328.0 155.8 Z" fill="#d08f55"/>
<path d="M240.9 177.1 L243.5 172.4 L246.1 177.1 Z" fill="#d08f55"/>
<path d="M256.4 175.7 L259.0 171.0 L261.6 175.7 Z" fill="#d08f55"/>
<path d="M220.8 184.8 L223.4 180.1 L226.0 184.8 Z" fill="#d08f55"/>
<path d="M190.5 183.5 L193.1 178.9 L195.7 183.5 Z" fill="#d08f55"/>
<path d="M291.7 203.6 L294.3 199.0 L296.9 203.6 Z" fill="#d08f55"/>
<path d="M362.3 116.6 L364.9 111.9 L367.5 116.6 Z" fill="#d08f55"/>
<path d="M393.2 129.4 L395.8 124.8 L398.4 129.4 Z" fill="#d08f55"/>
<path d="M382.0 132.8 L384.6 128.1 L387.2 132.8 Z" fill="#d08f55"/>
<path d="M391.5 141.9 L394.1 137.2 L396.7 141.9 Z" fill="#d08f55"/>
<path d="M380.5 149.5 L383.1 144.9 L385.7 149.5 Z" fill="#d08f55"/>
<path d="M418.5 126.3 L421.1 121.7 L423.7 126.3 Z" fill="#d08f55"/>
<path d="M435.0 112.9 L437.6 108.2 L440.2 112.9 Z" fill="#d08f55"/>
<path d="M422.0 155.8 L424.6 151.1 L427.2 155.8 Z" fill="#d08f55"/>
<path d="M433.6 170.9 L436.2 166.2 L438.8 170.9 Z" fill="#d08f55"/>
<path d="M396.7 194.7 L399.3 190.0 L401.9 194.7 Z" fill="#d08f55"/>
<path d="M384.7 199.9 L387.3 195.2 L389.9 199.9 Z" fill="#d08f55"/>
<path d="M334.3 140.2 L336.9 135.5 L339.5 140.2 Z" fill="#d08f55"/>
<path d="M335.8 147.1 L338.4 142.4 L341.0 147.1 Z" fill="#d08f55"/>
<path d="M322.9 155.8 L325.5 151.1 L328.1 155.8 Z" fill="#d08f55"/>
<path d="M196.8 218.8 L199.4 214.1 L202.0 218.8 Z" fill="#d08f55"/>
<path d="M260.6 243.7 L263.2 239.0 L265.8 243.7 Z" fill="#d08f55"/>
<path d="M392.4 209.9 L395.0 205.2 L397.6 209.9 Z" fill="#d08f55"/>
<path d="M342.8 220.4 L345.4 215.8 L348.0 220.4 Z" fill="#d08f55"/>
<path d="M358.8 245.7 L361.4 241.1 L364.0 245.7 Z" fill="#d08f55"/>
<path d="M388.4 283.5 L391.0 278.8 L393.6 283.5 Z" fill="#d08f55"/>
<path d="M437.1 304.4 L439.7 299.7 L442.3 304.4 Z" fill="#d08f55"/>
<path d="M378.9 265.4 L381.5 260.7 L384.1 265.4 Z" fill="#d08f55"/>
<path d="M580.3 218.4 L582.9 213.7 L585.5 218.4 Z" fill="#d08f55"/>
<path d="M499.0 230.8 L501.6 226.1 L504.2 230.8 Z" fill="#d08f55"/>
<path d="M521.2 254.0 L523.8 249.3 L526.4 254.0 Z" fill="#d08f55"/>
<path d="M534.7 306.5 L537.3 301.8 L539.9 306.5 Z" fill="#d08f55"/>
<path d="M746.2 224.6 L748.8 219.9 L751.4 224.6 Z" fill="#d08f55"/>
<path d="M695.8 294.9 L698.4 290.2 L701.0 294.9 Z" fill="#d08f55"/>
<path d="M719.0 299.6 L721.6 294.9 L724.2 299.6 Z" fill="#d08f55"/>
<path d="M689.2 150.2 L691.8 145.5 L694.4 150.2 Z" fill="#d08f55"/>
<path d="M716.6 139.4 L719.2 134.7 L721.8 139.4 Z" fill="#d08f55"/>
<path d="M612.9 183.3 L615.5 178.6 L618.1 183.3 Z" fill="#d08f55"/>
<path d="M731.7 136.7 L734.3 132.0 L736.9 136.7 Z" fill="#d08f55"/>
<path d="M486.0 127.4 L488.6 122.7 L491.2 127.4 Z" fill="#d08f55"/>
<path d="M551.7 146.4 L554.3 141.8 L556.9 146.4 Z" fill="#d08f55"/>
<path d="M600.0 162.6 L602.6 157.9 L605.2 162.6 Z" fill="#d08f55"/>
<path d="M612.4 183.3 L615.0 178.6 L617.6 183.3 Z" fill="#d08f55"/>
<path d="M484.9 184.4 L487.5 179.7 L490.1 184.4 Z" fill="#d08f55"/>
<path d="M496.3 175.0 L498.9 170.4 L501.5 175.0 Z" fill="#d08f55"/>
<path d="M573.0 189.5 L575.6 184.9 L578.2 189.5 Z" fill="#d08f55"/>
<path d="M548.2 196.8 L550.8 192.1 L553.4 196.8 Z" fill="#d08f55"/>
<path d="M539.9 201.6 L542.5 196.9 L545.1 201.6 Z" fill="#d08f55"/>
<path d="M759.7 323.4 L762.3 318.7 L764.9 323.4 Z" fill="#d08f55"/>
<path d="M255.7 207.4 L258.3 202.7 L260.9 207.4 Z" fill="#d08f55"/>
<path d="M275.1 210.8 L277.7 206.1 L280.3 210.8 Z" fill="#d08f55"/>
<path d="M550.9 321.7 L553.5 317.0 L556.1 321.7 Z" fill="#d08f55"/>
<path d="M482.4 325.2 L485.0 320.5 L487.6 325.2 Z" fill="#d08f55"/>
<path d="M187.5 305.0 L189.3 301.8 L191.1 305.0 Z" fill="#8a4b2a"/>
<text x="426.7" y="143.8" dy="2.74" font-size="7.6" textLength="47.6" lengthAdjust="spacingAndGlyphs" fill="#1c1c1c" stroke="#fff" stroke-opacity="0.85" stroke-width="1.5" stroke-linejoin="round" paint-order="stroke" font-style="normal">Stecklenberg</text>
<text x="511.2" y="161.4" dy="2.81" font-size="7.8" textLength="33.9" lengthAdjust="spacingAndGlyphs" fill="#1c1c1c" stroke="#fff" stroke-opacity="0.85" stroke-width="1.5" stroke-linejoin="round" paint-order="stroke" font-style="normal">Suderode</text>
<text x="535.2" y="178.3" dy="3.60" font-size="10" textLength="38.8" lengthAdjust="spacingAndGlyphs" fill="#1c1c1c" stroke="#fff" stroke-opacity="0.85" stroke-width="1.5" stroke-linejoin="round" paint-order="stroke" font-style="normal">Gernrode</text>
<text x="600.5" y="146.3" dy="2.81" font-size="7.8" textLength="22.8" lengthAdjust="spacingAndGlyphs" fill="#1c1c1c" stroke="#fff" stroke-opacity="0.85" stroke-width="1.5" stroke-linejoin="round" paint-order="stroke" font-style="normal">Rieder</text>
<text x="715.2" y="182.3" dy="3.35" font-size="9.3" textLength="47.7" lengthAdjust="spacingAndGlyphs" fill="#1c1c1c" stroke="#fff" stroke-opacity="0.85" stroke-width="1.5" stroke-linejoin="round" paint-order="stroke" font-style="normal">Ballenstedt</text>
<text x="733.2" y="192.6" dy="2.38" font-size="6.6" textLength="34.2" lengthAdjust="spacingAndGlyphs" fill="#777" stroke="#fff" stroke-opacity="0.85" stroke-width="1" stroke-linejoin="round" paint-order="stroke" font-style="italic">Ballenstedt</text>
<text x="329.9" y="279.6" dy="2.95" font-size="8.2" textLength="56.8" lengthAdjust="spacingAndGlyphs" fill="#1c1c1c" stroke="#fff" stroke-opacity="0.85" stroke-width="1.5" stroke-linejoin="round" paint-order="stroke" font-style="normal">Friedrichsbrunn</text>
<text x="717.0" y="96.6" dy="2.38" font-size="6.6" textLength="40.0" lengthAdjust="spacingAndGlyphs" fill="#8d63c9" stroke="#fff" stroke-opacity="0.85" stroke-width="1" stroke-linejoin="round" paint-order="stroke" font-style="normal">Ballenstedt</text>
<rect x="572.5" y="97.0" width="28.0" height="9.6" rx="1.2" fill="#f1f1d3" stroke="#c9c99a" stroke-width="0.6"/>
<text x="586.5" y="104.4" font-size="7.3" text-anchor="middle" fill="#3a3a2a">L 242</text>
<rect x="209.3" y="247.7" width="22.8" height="11.4" rx="1.2" fill="#f1f1d3" stroke="#c9c99a" stroke-width="0.6"/>
<text x="220.7" y="256.0" font-size="7.3" text-anchor="middle" fill="#3a3a2a">L 93</text>
<rect x="276.7" y="309.5" width="22.3" height="11.7" rx="1.2" fill="#f1f1d3" stroke="#c9c99a" stroke-width="0.6"/>
<text x="287.9" y="318.0" font-size="7.3" text-anchor="middle" fill="#3a3a2a">L 95</text>
<rect x="659.3" y="204.6" width="26.9" height="11.6" rx="1.2" fill="#f7e6d2" stroke="#d2ae86" stroke-width="0.6"/>
<text x="672.8" y="213.0" font-size="7.3" text-anchor="middle" fill="#5a3c1e">B 185</text>
<rect x="608.8" y="246.6" width="26.4" height="11.4" rx="1.2" fill="#f7e6d2" stroke="#d2ae86" stroke-width="0.6"/>
<text x="622.0" y="254.9" font-size="7.3" text-anchor="middle" fill="#5a3c1e">B 185</text>
<path d="M373.8 273.6 C375.2 272.0 379.3 267.0 382.1 264.2 C384.9 261.5 386.6 259.4 390.4 257.0 C394.2 254.6 401.8 253.4 404.9 249.7 C408.0 246.1 407.7 239.0 409.0 235.2 C410.4 231.4 412.2 230.4 413.2 226.9 C414.2 223.5 413.5 218.3 415.3 214.5 C417.0 210.7 420.9 206.7 423.6 204.1 C426.2 201.6 428.9 200.4 431.0 199.0 C433.1 197.6 434.5 196.5 436.0 195.5 C437.5 194.5 438.5 193.8 440.0 193.1 C441.5 192.3 443.5 191.3 445.2 191.0 C446.9 190.7 449.0 190.5 450.4 191.0 C451.8 191.5 452.3 193.0 453.5 194.1 C454.7 195.2 456.2 196.7 457.6 197.3 C459.0 197.9 459.7 197.3 461.8 197.8 C463.9 198.3 467.7 199.5 470.0 200.5 C472.3 201.5 474.5 204.1 475.6 203.6 C476.7 203.1 476.4 198.9 476.8 197.3 C477.2 195.7 477.2 194.8 478.3 194.1 C479.4 193.4 482.1 193.3 483.5 193.1 C484.9 192.9 485.2 193.2 486.6 193.1 C488.0 192.9 490.0 193.3 492.0 192.2 C494.0 191.1 496.6 187.9 498.5 186.3 C500.4 184.7 502.2 184.1 503.7 182.4 C505.2 180.7 506.4 177.7 507.6 175.9 C508.8 174.1 510.3 172.2 510.8 171.4" fill="none" stroke="#e39142" stroke-width="2.8" stroke-linecap="round" stroke-linejoin="round"/>
<path d="M525.7 187.6 C526.1 187.1 526.8 185.9 528.3 185.0 C529.8 184.0 532.8 182.2 534.8 181.7 C536.7 181.3 538.2 182.5 539.9 182.4 C541.7 182.3 544.3 181.3 545.1 181.1" fill="none" stroke="#58cf62" stroke-width="2.5" stroke-linecap="round" stroke-linejoin="round"/>
<path d="M524.4 190.8 C524.0 191.5 523.3 193.7 521.8 194.7 C520.3 195.7 517.5 196.0 515.3 196.9 C513.2 197.8 511.0 199.1 508.9 199.9 C506.7 200.6 504.5 200.8 502.4 201.4 C500.2 202.0 497.0 203.0 495.9 203.4" fill="none" stroke="#58cf62" stroke-width="2.5" stroke-linecap="round" stroke-linejoin="round"/>
<path d="M513.5 200.0 C511.7 200.5 506.5 201.4 503.1 203.1 C499.6 204.8 495.0 208.1 492.7 210.4 C490.5 212.6 490.0 214.2 489.6 216.6 C489.3 219.0 491.2 221.8 490.7 224.9 C490.1 228.0 487.5 232.5 486.5 235.2 C485.5 238.0 484.1 239.0 484.4 241.5 C484.8 243.9 488.2 246.3 488.6 249.7 C488.9 253.2 487.4 259.1 486.5 262.2 C485.6 265.3 484.1 266.0 483.4 268.4 C482.7 270.8 483.2 274.3 482.4 276.7 C481.5 279.1 479.9 280.8 478.2 282.9 C476.5 285.0 471.8 287.7 472.0 289.1 C472.2 290.5 478.6 290.2 479.5 291.2 C480.4 292.2 477.8 294.6 477.4 295.3" fill="none" stroke="#58cf62" stroke-width="2.5" stroke-linecap="round" stroke-linejoin="round"/>
<path d="M510.5 171.6 C511.2 171.7 513.9 171.4 515.0 172.2 C516.1 172.9 517.1 175.0 517.0 176.1 C516.9 177.2 514.7 177.6 514.4 178.7 C514.1 179.8 514.0 181.6 515.0 182.6 C516.0 183.6 518.7 183.8 520.2 184.5 C521.7 185.2 523.2 185.7 524.1 186.5 C525.0 187.3 525.6 188.2 525.4 189.1 C525.2 190.0 523.7 191.0 522.7 191.7 C521.8 192.4 521.5 192.5 519.7 193.3 C518.0 194.1 514.8 195.3 512.2 196.4 C509.6 197.5 506.5 198.9 503.9 200.0 C501.3 201.1 498.8 203.0 496.7 203.2 C494.6 203.4 493.2 201.4 491.5 201.1 C489.8 200.8 487.4 200.8 486.3 201.6 C485.2 202.4 485.3 204.3 484.8 205.7 C484.3 207.1 482.9 208.8 483.2 209.9 C483.4 211.0 485.7 211.6 486.3 212.5 C486.9 213.4 487.4 214.5 486.9 215.6 C486.4 216.7 484.7 218.1 483.2 219.2 C481.7 220.3 479.7 221.8 478.0 222.3 C476.3 222.8 474.4 221.8 472.9 222.3 C471.3 222.8 470.3 224.2 468.7 225.4 C467.1 226.6 465.4 228.0 463.5 229.6 C461.6 231.2 459.0 232.9 457.3 234.8 C455.6 236.7 454.2 239.1 453.2 241.0 C452.2 242.9 451.9 244.0 451.1 246.2 C450.2 248.4 449.2 251.4 448.1 254.1 C447.0 256.8 445.2 258.9 444.5 262.4 C443.8 265.9 444.2 269.2 444.1 275.2 C444.0 281.2 444.0 294.7 444.0 298.6" fill="none" stroke="#e39142" stroke-width="2.3" stroke-linecap="round" stroke-linejoin="round"/>
<path d="M537.4 100.5 C537.2 101.1 537.2 102.9 536.7 103.8 C536.2 104.6 534.6 105.4 534.1 105.7" fill="none" stroke="#9bd02f" stroke-width="2.7" stroke-linecap="round" stroke-linejoin="round"/>
<path d="M527.0 118.0 L525.1 127.1" fill="none" stroke="#9bd02f" stroke-width="2.7" stroke-linecap="round" stroke-linejoin="round"/>
<path d="M532.2 140.0 C532.4 140.9 533.7 143.7 533.5 145.2 C533.3 146.7 532.0 148.0 530.9 149.1 C529.8 150.2 527.6 151.3 527.0 151.7" fill="none" stroke="#9bd02f" stroke-width="2.7" stroke-linecap="round" stroke-linejoin="round"/>
<circle cx="488.1" cy="130.3" r="1.2" fill="#2b7bf2"/>
<path d="M506.3 134.9 C506.4 135.7 507.3 138.3 506.9 140.0 C506.5 141.8 504.7 143.9 503.7 145.2 C502.7 146.5 501.3 147.2 501.1 147.8 C500.9 148.5 502.2 148.9 502.4 149.1" fill="none" stroke="#2b7bf2" stroke-width="2.7" stroke-linecap="round" stroke-linejoin="round"/>
<path d="M519.9 153.6 C520.6 153.3 523.2 152.6 524.4 151.7 C525.6 150.8 526.6 149.0 527.0 148.5" fill="none" stroke="#2b7bf2" stroke-width="2.7" stroke-linecap="round" stroke-linejoin="round"/>
<path d="M477.8 150.0 C479.1 150.6 483.0 152.7 485.5 153.9 C488.1 155.1 492.0 156.6 493.3 157.1" fill="none" stroke="#4fd9d0" stroke-width="2.7" stroke-linecap="round" stroke-linejoin="round"/>
<path d="M507.6 163.0 C507.8 163.8 508.3 166.7 508.9 168.1 C509.4 169.5 510.5 170.8 510.8 171.4" fill="none" stroke="#4fd9d0" stroke-width="2.7" stroke-linecap="round" stroke-linejoin="round"/>
<path d="M472.6 147.8 L476.5 149.1" fill="none" stroke="#4fd9d0" stroke-width="2.7" stroke-linecap="round" stroke-linejoin="round"/>
<path d="M510.8 171.4 C511.6 171.4 513.8 171.0 515.3 171.4 C516.8 171.7 519.1 173.0 519.9 173.3" fill="none" stroke="#3c1ee0" stroke-width="2.8" stroke-linecap="round" stroke-linejoin="round"/>
<path d="M536.5 174.4 C537.6 174.3 540.9 174.1 543.0 174.0 C545.1 173.9 546.8 173.5 549.0 173.6 C551.2 173.7 553.8 174.2 556.0 174.3 C558.2 174.4 561.3 174.1 562.4 174.0" fill="none" stroke="#3c1ee0" stroke-width="2.8" stroke-linecap="round" stroke-linejoin="round"/>
<path d="M594.8 174.3 L600.6 174.3" fill="none" stroke="#3c1ee0" stroke-width="2.8" stroke-linecap="round" stroke-linejoin="round"/>
<circle cx="528.9" cy="174.6" r="0.7" fill="#3c1ee0"/>
<circle cx="571" cy="174.6" r="0.7" fill="#3c1ee0"/>
<circle cx="586.4" cy="174.6" r="0.7" fill="#3c1ee0"/>
<text x="531.9" y="111.5" font-size="9.0" text-anchor="middle" transform="rotate(-62 531.9 111.5)" fill="#000" stroke="#fff" stroke-width="2.1" stroke-linejoin="round" paint-order="stroke" dy="3.2" font-family="'Liberation Sans',sans-serif" textLength="13.9" lengthAdjust="spacingAndGlyphs">44K</text>
<text x="527.0" y="134.9" font-size="9.0" text-anchor="middle" transform="rotate(58 527.0 134.9)" fill="#000" stroke="#fff" stroke-width="2.1" stroke-linejoin="round" paint-order="stroke" dy="3.2" font-family="'Liberation Sans',sans-serif" textLength="13.9" lengthAdjust="spacingAndGlyphs">44K</text>
<text x="497.2" y="132.9" font-size="9.0" text-anchor="middle" transform="rotate(17 497.2 132.9)" fill="#000" stroke="#fff" stroke-width="2.1" stroke-linejoin="round" paint-order="stroke" dy="3.2" font-family="'Liberation Sans',sans-serif" textLength="13.9" lengthAdjust="spacingAndGlyphs">51G</text>
<text x="511.5" y="152.3" font-size="9.0" text-anchor="middle" transform="rotate(17 511.5 152.3)" fill="#000" stroke="#fff" stroke-width="2.1" stroke-linejoin="round" paint-order="stroke" dy="3.2" font-family="'Liberation Sans',sans-serif" textLength="13.9" lengthAdjust="spacingAndGlyphs">51G</text>
<text x="498.5" y="162.3" font-size="9.0" text-anchor="middle" transform="rotate(27 498.5 162.3)" fill="#000" stroke="#fff" stroke-width="2.1" stroke-linejoin="round" paint-order="stroke" dy="3.2" font-family="'Liberation Sans',sans-serif" textLength="13.9" lengthAdjust="spacingAndGlyphs">50N</text>
<text x="467.5" y="151.2" font-size="9.0" text-anchor="middle" transform="rotate(0 467.5 151.2)" fill="#000" stroke="#fff" stroke-width="2.1" stroke-linejoin="round" paint-order="stroke" dy="3.2" font-family="'Liberation Sans',sans-serif" textLength="13.9" lengthAdjust="spacingAndGlyphs">50N</text>
<text x="527.3" y="174.4" font-size="9.0" text-anchor="middle" transform="rotate(0 527.3 174.4)" fill="#000" stroke="#fff" stroke-width="2.1" stroke-linejoin="round" paint-order="stroke" dy="3.2" font-family="'Liberation Sans',sans-serif" textLength="13.9" lengthAdjust="spacingAndGlyphs">50O</text>
<text x="570.6" y="174.4" font-size="9.0" text-anchor="middle" transform="rotate(0 570.6 174.4)" fill="#000" stroke="#fff" stroke-width="2.1" stroke-linejoin="round" paint-order="stroke" dy="3.2" font-family="'Liberation Sans',sans-serif" textLength="13.9" lengthAdjust="spacingAndGlyphs">50O</text>
<text x="586.4" y="174.4" font-size="9.0" text-anchor="middle" transform="rotate(0 586.4 174.4)" fill="#000" stroke="#fff" stroke-width="2.1" stroke-linejoin="round" paint-order="stroke" dy="3.2" font-family="'Liberation Sans',sans-serif" textLength="13.9" lengthAdjust="spacingAndGlyphs">50O</text>
<text x="539.9" y="187.6" font-size="9.0" text-anchor="middle" transform="rotate(-25 539.9 187.6)" fill="#000" stroke="#fff" stroke-width="2.1" stroke-linejoin="round" paint-order="stroke" dy="3.2" font-family="'Liberation Sans',sans-serif" textLength="13.9" lengthAdjust="spacingAndGlyphs">44F</text>
<text x="496.5" y="205.5" font-size="9.0" text-anchor="middle" transform="rotate(-30 496.5 205.5)" fill="#000" stroke="#fff" stroke-width="2.1" stroke-linejoin="round" paint-order="stroke" dy="3.2" font-family="'Liberation Sans',sans-serif" textLength="13.9" lengthAdjust="spacingAndGlyphs">44F</text>
<text x="524.1" y="191.7" font-size="9.0" text-anchor="middle" transform="rotate(-68 524.1 191.7)" fill="#000" stroke="#fff" stroke-width="2.1" stroke-linejoin="round" paint-order="stroke" dy="3.2" font-family="'Liberation Sans',sans-serif" textLength="13.9" lengthAdjust="spacingAndGlyphs">44F</text>
<text x="384.2" y="268.4" font-size="9.0" text-anchor="middle" transform="rotate(-45 384.2 268.4)" fill="#000" stroke="#fff" stroke-width="2.1" stroke-linejoin="round" paint-order="stroke" dy="3.2" font-family="'Liberation Sans',sans-serif" textLength="13.9" lengthAdjust="spacingAndGlyphs">44J</text>
<text x="407.0" y="241.5" font-size="9.0" text-anchor="middle" transform="rotate(-75 407.0 241.5)" fill="#000" stroke="#fff" stroke-width="2.1" stroke-linejoin="round" paint-order="stroke" dy="3.2" font-family="'Liberation Sans',sans-serif" textLength="13.9" lengthAdjust="spacingAndGlyphs">44J</text>
<text x="420.4" y="210.4" font-size="9.0" text-anchor="middle" transform="rotate(-58 420.4 210.4)" fill="#000" stroke="#fff" stroke-width="2.1" stroke-linejoin="round" paint-order="stroke" dy="3.2" font-family="'Liberation Sans',sans-serif" textLength="13.9" lengthAdjust="spacingAndGlyphs">44J</text>
<text x="441.2" y="197.7" font-size="9.0" text-anchor="middle" transform="rotate(-35 441.2 197.7)" fill="#000" stroke="#fff" stroke-width="2.1" stroke-linejoin="round" paint-order="stroke" dy="3.2" font-family="'Liberation Sans',sans-serif" textLength="13.9" lengthAdjust="spacingAndGlyphs">44J</text>
<text x="468.5" y="200.4" font-size="9.0" text-anchor="middle" transform="rotate(40 468.5 200.4)" fill="#000" stroke="#fff" stroke-width="2.1" stroke-linejoin="round" paint-order="stroke" dy="3.2" font-family="'Liberation Sans',sans-serif" textLength="13.9" lengthAdjust="spacingAndGlyphs">44J</text>
<text x="493.9" y="192.1" font-size="9.0" text-anchor="middle" transform="rotate(-20 493.9 192.1)" fill="#000" stroke="#fff" stroke-width="2.1" stroke-linejoin="round" paint-order="stroke" dy="3.2" font-family="'Liberation Sans',sans-serif" textLength="13.9" lengthAdjust="spacingAndGlyphs">44J</text>
<text x="463.3" y="231.5" font-size="9.0" text-anchor="middle" transform="rotate(-38 463.3 231.5)" fill="#000" stroke="#fff" stroke-width="2.1" stroke-linejoin="round" paint-order="stroke" dy="3.2" font-family="'Liberation Sans',sans-serif" textLength="13.9" lengthAdjust="spacingAndGlyphs">44G</text>
<text x="485.6" y="214.4" font-size="9.0" text-anchor="middle" transform="rotate(-80 485.6 214.4)" fill="#000" stroke="#fff" stroke-width="2.1" stroke-linejoin="round" paint-order="stroke" dy="3.2" font-family="'Liberation Sans',sans-serif" textLength="13.9" lengthAdjust="spacingAndGlyphs">44G</text>
<text x="442.6" y="280.0" font-size="9.0" text-anchor="middle" transform="rotate(-90 442.6 280.0)" fill="#000" stroke="#fff" stroke-width="2.1" stroke-linejoin="round" paint-order="stroke" dy="3.2" font-family="'Liberation Sans',sans-serif" textLength="13.9" lengthAdjust="spacingAndGlyphs">44G</text>
<text x="475.4" y="285.0" font-size="9.0" text-anchor="middle" transform="rotate(-50 475.4 285.0)" fill="#000" stroke="#fff" stroke-width="2.1" stroke-linejoin="round" paint-order="stroke" dy="3.2" font-family="'Liberation Sans',sans-serif" textLength="13.9" lengthAdjust="spacingAndGlyphs">44F</text>
<text x="487.2" y="232.5" font-size="9.0" text-anchor="middle" transform="rotate(-75 487.2 232.5)" fill="#000" stroke="#fff" stroke-width="2.1" stroke-linejoin="round" paint-order="stroke" dy="3.2" font-family="'Liberation Sans',sans-serif" textLength="13.9" lengthAdjust="spacingAndGlyphs">44F</text>
<text x="488.2" y="257.0" font-size="9.0" text-anchor="middle" transform="rotate(-80 488.2 257.0)" fill="#000" stroke="#fff" stroke-width="2.1" stroke-linejoin="round" paint-order="stroke" dy="3.2" font-family="'Liberation Sans',sans-serif" textLength="13.9" lengthAdjust="spacingAndGlyphs">44F</text>
<text x="476.1" y="285.0" font-size="9.0" text-anchor="middle" transform="rotate(-50 476.1 285.0)" fill="#000" stroke="#fff" stroke-width="2.1" stroke-linejoin="round" paint-order="stroke" dy="3.2" font-family="'Liberation Sans',sans-serif" textLength="13.9" lengthAdjust="spacingAndGlyphs">44F</text>
<circle cx="531.4" cy="174.5" r="0.6" fill="#5a3ef0"/>
<circle cx="574.7" cy="174.5" r="0.6" fill="#5a3ef0"/>
<circle cx="590.5" cy="174.5" r="0.6" fill="#5a3ef0"/>
<path d="M510.8 171.4 C511.6 171.5 514.2 171.2 515.3 172.0 C516.4 172.8 517.4 174.8 517.3 175.9 C517.2 177.0 515.0 177.4 514.7 178.5 C514.4 179.6 514.3 181.4 515.3 182.4 C516.3 183.4 519.0 183.7 520.5 184.3 C522.0 185.0 523.5 185.5 524.4 186.3 C525.3 187.1 525.9 188.0 525.7 188.9 C525.5 189.8 524.0 190.8 523.0 191.5 C522.0 192.2 521.8 192.3 520.0 193.1 C518.2 193.9 515.1 195.1 512.5 196.2 C509.9 197.3 506.8 198.7 504.2 199.8 C501.6 200.9 499.1 202.8 497.0 203.0 C494.9 203.2 493.5 201.2 491.8 200.9 C490.1 200.6 487.7 200.6 486.6 201.4 C485.5 202.2 485.6 204.1 485.1 205.5 C484.6 206.9 483.2 208.6 483.5 209.7 C483.8 210.8 486.0 211.4 486.6 212.3 C487.2 213.2 487.7 214.3 487.2 215.4 C486.7 216.5 485.0 217.9 483.5 219.0 C482.0 220.1 480.0 221.6 478.3 222.1 C476.6 222.6 474.8 221.6 473.2 222.1 C471.6 222.6 470.6 224.0 469.0 225.2 C467.4 226.4 465.7 227.8 463.8 229.4 C461.9 231.0 459.3 232.7 457.6 234.6 C455.9 236.5 454.5 238.9 453.5 240.8 C452.5 242.7 452.2 243.8 451.4 246.0 C450.5 248.2 449.5 251.2 448.4 253.9 C447.3 256.6 445.5 258.7 444.8 262.2 C444.1 265.7 444.5 269.0 444.4 275.0 C444.3 281.0 444.3 294.5 444.3 298.4" fill="none" stroke="#fff000" stroke-width="2.1" stroke-linecap="round" stroke-linejoin="round"/>
</g>
<rect x="182.4" y="101.8" width="18.9" height="35.3" rx="2.6" fill="#fff" fill-opacity="0.4"/>
<path d="M186.2 103.9 H197.5 a2 2 0 0 1 2 2 V118.7 H184.2 V105.9 a2 2 0 0 1 2 -2 Z" fill="#003c88" fill-opacity="0.5"/>
<path d="M184.2 120 H199.5 V132.7 a2 2 0 0 1 -2 2 H186.2 a2 2 0 0 1 -2 -2 Z" fill="#003c88" fill-opacity="0.5"/>
<path d="M188.6 111.3 H195.2 M191.9 108 V114.6" stroke="#fff" stroke-width="1.5"/>
<path d="M189.4 127.2 H194.4" stroke="#fff" stroke-width="1.5"/>
<rect x="182.8" y="302" width="63.8" height="14.4" rx="2.6" fill="#003c88" fill-opacity="0.3"/>
<path d="M185 304 V312.6 H244.6 V304" fill="none" stroke="#eee" stroke-width="0.8"/>
<text x="214.9" y="311" font-size="7.4" text-anchor="middle" fill="#eee" font-family="'Liberation Sans',sans-serif">2 km</text>
<rect x="745.6" y="298.2" width="19.4" height="19.4" rx="2.6" fill="#fff" fill-opacity="0.4"/>
<rect x="747.6" y="300.3" width="15.4" height="15.4" rx="2" fill="#003c88" fill-opacity="0.5"/>
<text x="755.3" y="312.4" font-size="12" font-weight="bold" text-anchor="middle" fill="#fff" font-family="'Liberation Sans',sans-serif">i</text>
<rect x="717.4" y="117.4" width="30" height="7.6" fill="#dcdcdc" fill-opacity="0.55"/>
<path d="M738.6 111.5 V117.8 M735.2 115.6 L738.6 114.2 L742 115.6 M737.2 118 H740" stroke="#9a6fd0" stroke-width="0.9" fill="none"/>
<rect x="700" y="99.3" width="67.2" height="16.6" fill="#fff" fill-opacity="0.55"/>
<g font-family="'Liberation Sans',sans-serif" font-size="11.7" stroke-width="0.6"><title>NEXTGIS</title><text x="705.45" y="111.6" text-anchor="middle" fill="#111" stroke="#111">N</text><text x="726.15" y="111.6" text-anchor="middle" fill="#1866c8" stroke="#1866c8">X</text><text x="736.80" y="111.6" text-anchor="middle" fill="#111" stroke="#111">T</text><text x="746.75" y="111.6" text-anchor="middle" fill="#1866c8" stroke="#1866c8">G</text><text x="753.30" y="111.6" text-anchor="middle" fill="#1866c8" stroke="#1866c8">I</text><text x="760.90" y="111.6" text-anchor="middle" fill="#1866c8" stroke="#1866c8">S</text><text x="0" y="0" text-anchor="middle" transform="translate(715.7 111.6) scale(-1 1)" fill="#111" stroke="#111">E</text></g>
<rect x="732" y="119" width="35.6" height="39" fill="#fff" fill-opacity="0.45"/>
<rect x="742.6" y="131" width="14.6" height="14.6" rx="2.2" fill="#1565c0"/>
<path d="M752.6 135 L747.2 138.3 L752.6 141.6" fill="none" stroke="#fff" stroke-width="0.9"/>
<circle cx="752.8" cy="134.8" r="1.7" fill="#fff"/><circle cx="747" cy="138.3" r="1.7" fill="#fff"/><circle cx="752.8" cy="141.8" r="1.7" fill="#fff"/>
</svg>
<div class="a" style="left:177px;top:327px;width:594px;height:30px;background:#fff;border-bottom:1px solid #dcdcdc"></div>
<div class="a" style="left:177px;top:327.3px;width:130.5px;height:30px;background:#fff;border-top:2.4px solid #0f4c9c;border-right:1px solid #dedede;border-left:1px solid #e4e4e4"></div>
<div class="a" style="left:472px;top:325px;width:9.5px;height:1px;background:#c9c9c9"></div>
<div class="a" style="left:177px;top:357px;width:594px;height:20.5px;background:linear-gradient(#fbfbfb,#f1f1f1);border-bottom:1px solid #d9dde3"></div>
<div class="a" style="left:570px;top:358.2px;width:197.5px;height:16.4px;border:1px solid #b5bcc7;border-top-color:#9aa6b8;background:#fff"></div>
<div class="a" style="left:177px;top:377.5px;width:585px;height:20.6px;background:#eff4f8;border-bottom:1px solid #dfe3e8"></div>
<div class="a" style="left:762px;top:377.5px;width:9px;height:20.6px;background:#f4f7fa"></div>
<div class="a" style="left:177.5px;top:398.90px;width:584.3px;height:21.62px;background:#fff;border-bottom:1px solid #e2e2e2"></div>
<div class="a" style="left:177.5px;top:420.52px;width:584.3px;height:21.62px;background:#fdf6c0;border-bottom:1px solid #e2e2e2"></div>
<div class="a" style="left:177.5px;top:442.14px;width:584.3px;height:21.62px;background:#fff;border-bottom:1px solid #e2e2e2"></div>
<div class="a" style="left:177.5px;top:463.76px;width:584.3px;height:21.62px;background:#fff;border-bottom:1px solid #e2e2e2"></div>
<div class="a" style="left:177.5px;top:485.38px;width:584.3px;height:21.62px;background:#fff;border-bottom:1px solid #e2e2e2"></div>
<div class="a" style="left:177.5px;top:507.00px;width:584.3px;height:21.62px;background:#fff;border-bottom:1px solid #e2e2e2"></div>
<div class="a" style="left:177.5px;top:528.62px;width:584.3px;height:21.62px;background:#fff;border-bottom:1px solid #e2e2e2"></div>
<div class="a" style="left:204.70px;top:377.5px;width:1px;height:164.5px;background:rgba(120,130,140,0.22)"></div>
<div class="a" style="left:260.40px;top:377.5px;width:1px;height:164.5px;background:rgba(120,130,140,0.22)"></div>
<div class="a" style="left:316.10px;top:377.5px;width:1px;height:164.5px;background:rgba(120,130,140,0.22)"></div>
<div class="a" style="left:371.80px;top:377.5px;width:1px;height:164.5px;background:rgba(120,130,140,0.22)"></div>
<div class="a" style="left:427.50px;top:377.5px;width:1px;height:164.5px;background:rgba(120,130,140,0.22)"></div>
<div class="a" style="left:483.20px;top:377.5px;width:1px;height:164.5px;background:rgba(120,130,140,0.22)"></div>
<div class="a" style="left:538.90px;top:377.5px;width:1px;height:164.5px;background:rgba(120,130,140,0.22)"></div>
<div class="a" style="left:594.60px;top:377.5px;width:1px;height:164.5px;background:rgba(120,130,140,0.22)"></div>
<div class="a" style="left:650.30px;top:377.5px;width:1px;height:164.5px;background:rgba(120,130,140,0.22)"></div>
<div class="a" style="left:706.00px;top:377.5px;width:1px;height:164.5px;background:rgba(120,130,140,0.22)"></div>
<div class="a" style="left:761.30px;top:377.5px;width:1px;height:164.5px;background:rgba(120,130,140,0.22)"></div>
<div class="a" style="left:177px;top:377.5px;width:1px;height:164.5px;background:#e6e6e6"></div>
<div class="a" style="left:174px;top:540.7px;width:598px;height:3px;background:#fff"></div>
<div class="a" style="left:761.6px;top:398.4px;width:7.8px;height:142.3px;background:#e9e9e9"></div>
<div class="a" style="left:767px;top:398.4px;width:2.3px;height:130.4px;background:#ee7a47;border-radius:0 0 1px 1px"></div>
<svg width="772" height="542" viewBox="0 0 772 542">
<defs><radialGradient id="rsel" cx="0.5" cy="0.5" r="0.5"><stop offset="0" stop-color="#fff"/><stop offset="0.28" stop-color="#fff"/><stop offset="0.42" stop-color="#e9774a"/><stop offset="1" stop-color="#d4562a"/></radialGradient></defs>
<circle cx="186.3" cy="407.50" r="5.4" fill="#fff" stroke="#9a9a9a" stroke-width="0.9"/>
<circle cx="186.3" cy="429.12" r="5.5" fill="url(#rsel)" stroke="#b8522e" stroke-width="0.9"/>
<circle cx="186.3" cy="450.74" r="5.4" fill="#fff" stroke="#9a9a9a" stroke-width="0.9"/>
<circle cx="186.3" cy="472.36" r="5.4" fill="#fff" stroke="#9a9a9a" stroke-width="0.9"/>
<circle cx="186.3" cy="493.98" r="5.4" fill="#fff" stroke="#9a9a9a" stroke-width="0.9"/>
<circle cx="186.3" cy="515.60" r="5.4" fill="#fff" stroke="#9a9a9a" stroke-width="0.9"/>
<circle cx="186.3" cy="537.22" r="5.4" fill="#fff" stroke="#9a9a9a" stroke-width="0.9"/>
<rect x="186.4" y="339.6" width="9.2" height="8.8" fill="#fff" stroke="#7c9fd0" stroke-width="0.9"/><rect x="186.4" y="339.4" width="9.2" height="2.2" fill="#9cbce6"/><path d="M189.4 341.6 V348.4 M192.6 341.6 V348.4 M186.4 344 H195.6 M186.4 346.2 H195.6" stroke="#a9c3e6" stroke-width="0.6"/>
<path d="M294.6 341 L299.8 346 M299.8 341 L294.6 346" stroke="#8f8f8f" stroke-width="1.1"/>
<rect x="184.4" y="363.8" width="8" height="6.6" rx="0.8" fill="#f5f7fb" stroke="#4a5f8a" stroke-width="0.9"/><rect x="184.4" y="363.6" width="8" height="1.8" fill="#4a6ea8"/>
<path d="M232.4 364.4 H237.6 L239.8 366.6 V370.4 H234.6 Z" fill="#fbf6e4" stroke="#b9a468" stroke-width="0.8"/><path d="M231.8 363.6 L236.4 368.2" stroke="#c9963c" stroke-width="1.2"/><circle cx="237" cy="368" r="1.4" fill="#8fb2d8"/>
<path d="M274.2 363.4 L282 370.8 M282 363.4 L274.2 370.8" stroke="#d8261c" stroke-width="2" stroke-linecap="round"/>
<g fill="#58a857"><rect x="323.6" y="361.4" width="4.4" height="4.4" rx="1"/><rect x="330.2" y="361.4" width="4.4" height="4.4" rx="1"/><rect x="323.6" y="367.8" width="4.4" height="4.4" rx="1"/><rect x="330.2" y="367.8" width="4.4" height="4.4" rx="1"/></g>
<circle cx="763.5" cy="383.2" r="4.2" fill="#111"/><path d="M761.2 383.2 H765.8 M763.5 380.9 V385.5" stroke="#fff" stroke-width="1.3"/>
</svg>
<span class="t" style="left:573.00px;top:358.70px;font-size:10.5px;line-height:14px;font-weight:400;color:#9a9a9a;font-style:italic;transform:scaleX(0.8922);transform-origin:0 50%;">Search...</span>
<span class="t" style="left:200.00px;top:337.80px;font-size:9.6px;line-height:12px;font-weight:400;color:#333;font-style:normal;letter-spacing:0.9px;transform:scaleX(0.8413);transform-origin:0 50%;">WEGEABSCHNITTE</span>
<span class="t" style="left:207.80px;top:380.00px;font-size:10.3px;line-height:13px;font-weight:400;color:#2a2a2a;font-style:normal;transform:scaleX(0.9766);transform-origin:0 50%;-webkit-text-stroke:0.55px #2a2a2a;">#</span>
<span class="t" style="left:263.50px;top:380.00px;font-size:10.3px;line-height:13px;font-weight:400;color:#2a2a2a;font-style:normal;transform:scaleX(0.9409);transform-origin:0 50%;-webkit-text-stroke:0.55px #2a2a2a;">record_id</span>
<span class="t" style="left:319.20px;top:380.00px;font-size:10.3px;line-height:13px;font-weight:400;color:#2a2a2a;font-style:normal;transform:scaleX(0.9515);transform-origin:0 50%;-webkit-text-stroke:0.55px #2a2a2a;">gvobj_id</span>
<span class="t" style="left:374.90px;top:380.00px;font-size:10.3px;line-height:13px;font-weight:400;color:#2a2a2a;font-style:normal;letter-spacing:0.076px;-webkit-text-stroke:0.55px #2a2a2a;">abschnitt</span>
<span class="t" style="left:430.60px;top:380.00px;font-size:10.3px;line-height:13px;font-weight:400;color:#2a2a2a;font-style:normal;letter-spacing:0.119px;-webkit-text-stroke:0.55px #2a2a2a;">grafik</span>
<span class="t" style="left:486.30px;top:380.00px;font-size:10.3px;line-height:13px;font-weight:400;color:#2a2a2a;font-style:normal;letter-spacing:-0.070px;-webkit-text-stroke:0.55px #2a2a2a;">laenge</span>
<span class="t" style="left:542.00px;top:380.00px;font-size:10.3px;line-height:13px;font-weight:400;color:#2a2a2a;font-style:normal;letter-spacing:-0.058px;-webkit-text-stroke:0.55px #2a2a2a;">start_x</span>
<span class="t" style="left:597.70px;top:380.00px;font-size:10.3px;line-height:13px;font-weight:400;color:#2a2a2a;font-style:normal;letter-spacing:-0.058px;-webkit-text-stroke:0.55px #2a2a2a;">start_y</span>
<span class="t" style="left:653.40px;top:380.00px;font-size:10.3px;line-height:13px;font-weight:400;color:#2a2a2a;font-style:normal;transform:scaleX(0.9320);transform-origin:0 50%;-webkit-text-stroke:0.55px #2a2a2a;">ende_x</span>
<span class="t" style="left:709.10px;top:380.00px;font-size:10.3px;line-height:13px;font-weight:400;color:#2a2a2a;font-style:normal;transform:scaleX(0.9320);transform-origin:0 50%;-webkit-text-stroke:0.55px #2a2a2a;">ende_y</span>
<span class="t" style="left:207.80px;top:401.10px;font-size:10.2px;line-height:13px;font-weight:400;color:#111;font-style:normal;transform:scaleX(0.8745);transform-origin:0 50%;">1</span>
<span class="t" style="left:263.50px;top:401.10px;font-size:10.2px;line-height:13px;font-weight:400;color:#111;font-style:normal;transform:scaleX(0.9596);transform-origin:0 50%;">24232</span>
<span class="t" style="left:319.20px;top:401.10px;font-size:10.2px;line-height:13px;font-weight:400;color:#111;font-style:normal;transform:scaleX(0.9596);transform-origin:0 50%;">24218</span>
<span class="t" style="left:374.90px;top:401.10px;font-size:10.2px;line-height:13px;font-weight:400;color:#111;font-style:normal;">44J</span>
<span class="t" style="left:430.60px;top:401.10px;font-size:10.2px;line-height:13px;font-weight:400;color:#111;font-style:normal;transform:scaleX(0.9596);transform-origin:0 50%;">24218</span>
<span class="t" style="left:486.30px;top:401.10px;font-size:10.2px;line-height:13px;font-weight:400;color:#111;font-style:normal;transform:scaleX(0.9545);transform-origin:0 50%;">7103</span>
<span class="t" style="left:542.00px;top:401.10px;font-size:10.2px;line-height:13px;font-weight:400;color:#111;font-style:normal;transform:scaleX(0.9635);transform-origin:0 50%;">646257</span>
<span class="t" style="left:597.70px;top:401.10px;font-size:10.2px;line-height:13px;font-weight:400;color:#111;font-style:normal;transform:scaleX(0.9659);transform-origin:0 50%;">5732635</span>
<span class="t" style="left:653.40px;top:401.10px;font-size:10.2px;line-height:13px;font-weight:400;color:#111;font-style:normal;transform:scaleX(0.9635);transform-origin:0 50%;">641782</span>
<span class="t" style="left:709.10px;top:401.10px;font-size:10.2px;line-height:13px;font-weight:400;color:#111;font-style:normal;transform:scaleX(0.9659);transform-origin:0 50%;">5729034</span>
<span class="t" style="left:207.80px;top:422.72px;font-size:10.2px;line-height:13px;font-weight:400;color:#111;font-style:normal;transform:scaleX(0.8745);transform-origin:0 50%;">2</span>
<span class="t" style="left:263.50px;top:422.72px;font-size:10.2px;line-height:13px;font-weight:400;color:#111;font-style:normal;transform:scaleX(0.9596);transform-origin:0 50%;">24236</span>
<span class="t" style="left:319.20px;top:422.72px;font-size:10.2px;line-height:13px;font-weight:400;color:#111;font-style:normal;transform:scaleX(0.9596);transform-origin:0 50%;">24233</span>
<span class="t" style="left:374.90px;top:422.72px;font-size:10.2px;line-height:13px;font-weight:400;color:#111;font-style:normal;">44G</span>
<span class="t" style="left:430.60px;top:422.72px;font-size:10.2px;line-height:13px;font-weight:400;color:#111;font-style:normal;transform:scaleX(0.9596);transform-origin:0 50%;">24233</span>
<span class="t" style="left:486.30px;top:422.72px;font-size:10.2px;line-height:13px;font-weight:400;color:#111;font-style:normal;transform:scaleX(0.9545);transform-origin:0 50%;">6823</span>
<span class="t" style="left:542.00px;top:422.72px;font-size:10.2px;line-height:13px;font-weight:400;color:#111;font-style:normal;transform:scaleX(0.9635);transform-origin:0 50%;">646252</span>
<span class="t" style="left:597.70px;top:422.72px;font-size:10.2px;line-height:13px;font-weight:400;color:#111;font-style:normal;transform:scaleX(0.9659);transform-origin:0 50%;">5732644</span>
<span class="t" style="left:653.40px;top:422.72px;font-size:10.2px;line-height:13px;font-weight:400;color:#111;font-style:normal;transform:scaleX(0.9635);transform-origin:0 50%;">644096</span>
<span class="t" style="left:709.10px;top:422.72px;font-size:10.2px;line-height:13px;font-weight:400;color:#111;font-style:normal;transform:scaleX(0.9659);transform-origin:0 50%;">5728287</span>
<span class="t" style="left:207.80px;top:444.34px;font-size:10.2px;line-height:13px;font-weight:400;color:#111;font-style:normal;transform:scaleX(0.8745);transform-origin:0 50%;">3</span>
<span class="t" style="left:263.50px;top:444.34px;font-size:10.2px;line-height:13px;font-weight:400;color:#111;font-style:normal;transform:scaleX(0.9596);transform-origin:0 50%;">24243</span>
<span class="t" style="left:319.20px;top:444.34px;font-size:10.2px;line-height:13px;font-weight:400;color:#111;font-style:normal;transform:scaleX(0.9596);transform-origin:0 50%;">24240</span>
<span class="t" style="left:374.90px;top:444.34px;font-size:10.2px;line-height:13px;font-weight:400;color:#111;font-style:normal;">44K</span>
<span class="t" style="left:430.60px;top:444.34px;font-size:10.2px;line-height:13px;font-weight:400;color:#111;font-style:normal;transform:scaleX(0.9596);transform-origin:0 50%;">24240</span>
<span class="t" style="left:486.30px;top:444.34px;font-size:10.2px;line-height:13px;font-weight:400;color:#111;font-style:normal;transform:scaleX(0.9545);transform-origin:0 50%;">2284</span>
<span class="t" style="left:542.00px;top:444.34px;font-size:10.2px;line-height:13px;font-weight:400;color:#111;font-style:normal;transform:scaleX(0.9635);transform-origin:0 50%;">646785</span>
<span class="t" style="left:597.70px;top:444.34px;font-size:10.2px;line-height:13px;font-weight:400;color:#111;font-style:normal;transform:scaleX(0.9659);transform-origin:0 50%;">5733528</span>
<span class="t" style="left:653.40px;top:444.34px;font-size:10.2px;line-height:13px;font-weight:400;color:#111;font-style:normal;transform:scaleX(0.9635);transform-origin:0 50%;">647057</span>
<span class="t" style="left:709.10px;top:444.34px;font-size:10.2px;line-height:13px;font-weight:400;color:#111;font-style:normal;transform:scaleX(0.9659);transform-origin:0 50%;">5735041</span>
<span class="t" style="left:207.80px;top:465.96px;font-size:10.2px;line-height:13px;font-weight:400;color:#111;font-style:normal;transform:scaleX(0.8745);transform-origin:0 50%;">4</span>
<span class="t" style="left:263.50px;top:465.96px;font-size:10.2px;line-height:13px;font-weight:400;color:#111;font-style:normal;transform:scaleX(0.9596);transform-origin:0 50%;">24244</span>
<span class="t" style="left:319.20px;top:465.96px;font-size:10.2px;line-height:13px;font-weight:400;color:#111;font-style:normal;transform:scaleX(0.9596);transform-origin:0 50%;">24237</span>
<span class="t" style="left:374.90px;top:465.96px;font-size:10.2px;line-height:13px;font-weight:400;color:#111;font-style:normal;">44F</span>
<span class="t" style="left:430.60px;top:465.96px;font-size:10.2px;line-height:13px;font-weight:400;color:#111;font-style:normal;transform:scaleX(0.9596);transform-origin:0 50%;">24237</span>
<span class="t" style="left:486.30px;top:465.96px;font-size:10.2px;line-height:13px;font-weight:400;color:#111;font-style:normal;transform:scaleX(0.9545);transform-origin:0 50%;">6560</span>
<span class="t" style="left:542.00px;top:465.96px;font-size:10.2px;line-height:13px;font-weight:400;color:#111;font-style:normal;transform:scaleX(0.9635);transform-origin:0 50%;">647455</span>
<span class="t" style="left:597.70px;top:465.96px;font-size:10.2px;line-height:13px;font-weight:400;color:#111;font-style:normal;transform:scaleX(0.9659);transform-origin:0 50%;">5732224</span>
<span class="t" style="left:653.40px;top:465.96px;font-size:10.2px;line-height:13px;font-weight:400;color:#111;font-style:normal;transform:scaleX(0.9635);transform-origin:0 50%;">644998</span>
<span class="t" style="left:709.10px;top:465.96px;font-size:10.2px;line-height:13px;font-weight:400;color:#111;font-style:normal;transform:scaleX(0.9659);transform-origin:0 50%;">5728652</span>
<span class="t" style="left:207.80px;top:487.58px;font-size:10.2px;line-height:13px;font-weight:400;color:#111;font-style:normal;transform:scaleX(0.8745);transform-origin:0 50%;">5</span>
<span class="t" style="left:263.50px;top:487.58px;font-size:10.2px;line-height:13px;font-weight:400;color:#111;font-style:normal;transform:scaleX(0.9596);transform-origin:0 50%;">24248</span>
<span class="t" style="left:319.20px;top:487.58px;font-size:10.2px;line-height:13px;font-weight:400;color:#111;font-style:normal;transform:scaleX(0.9596);transform-origin:0 50%;">24245</span>
<span class="t" style="left:374.90px;top:487.58px;font-size:10.2px;line-height:13px;font-weight:400;color:#111;font-style:normal;">50O</span>
<span class="t" style="left:430.60px;top:487.58px;font-size:10.2px;line-height:13px;font-weight:400;color:#111;font-style:normal;transform:scaleX(0.9596);transform-origin:0 50%;">24245</span>
<span class="t" style="left:486.30px;top:487.58px;font-size:10.2px;line-height:13px;font-weight:400;color:#111;font-style:normal;transform:scaleX(0.9545);transform-origin:0 50%;">3174</span>
<span class="t" style="left:542.00px;top:487.58px;font-size:10.2px;line-height:13px;font-weight:400;color:#111;font-style:normal;transform:scaleX(0.9635);transform-origin:0 50%;">646252</span>
<span class="t" style="left:597.70px;top:487.58px;font-size:10.2px;line-height:13px;font-weight:400;color:#111;font-style:normal;transform:scaleX(0.9659);transform-origin:0 50%;">5732644</span>
<span class="t" style="left:653.40px;top:487.58px;font-size:10.2px;line-height:13px;font-weight:400;color:#111;font-style:normal;transform:scaleX(0.9635);transform-origin:0 50%;">649246</span>
<span class="t" style="left:709.10px;top:487.58px;font-size:10.2px;line-height:13px;font-weight:400;color:#111;font-style:normal;transform:scaleX(0.9659);transform-origin:0 50%;">5732627</span>
<span class="t" style="left:207.80px;top:509.20px;font-size:10.2px;line-height:13px;font-weight:400;color:#111;font-style:normal;transform:scaleX(0.8745);transform-origin:0 50%;">6</span>
<span class="t" style="left:263.50px;top:509.20px;font-size:10.2px;line-height:13px;font-weight:400;color:#111;font-style:normal;transform:scaleX(0.9596);transform-origin:0 50%;">24256</span>
<span class="t" style="left:319.20px;top:509.20px;font-size:10.2px;line-height:13px;font-weight:400;color:#111;font-style:normal;transform:scaleX(0.9596);transform-origin:0 50%;">24253</span>
<span class="t" style="left:374.90px;top:509.20px;font-size:10.2px;line-height:13px;font-weight:400;color:#111;font-style:normal;">50N</span>
<span class="t" style="left:430.60px;top:509.20px;font-size:10.2px;line-height:13px;font-weight:400;color:#111;font-style:normal;transform:scaleX(0.9596);transform-origin:0 50%;">24253</span>
<span class="t" style="left:486.30px;top:509.20px;font-size:10.2px;line-height:13px;font-weight:400;color:#111;font-style:normal;transform:scaleX(0.9545);transform-origin:0 50%;">2139</span>
<span class="t" style="left:542.00px;top:509.20px;font-size:10.2px;line-height:13px;font-weight:400;color:#111;font-style:normal;transform:scaleX(0.9635);transform-origin:0 50%;">646252</span>
<span class="t" style="left:597.70px;top:509.20px;font-size:10.2px;line-height:13px;font-weight:400;color:#111;font-style:normal;transform:scaleX(0.9659);transform-origin:0 50%;">5732644</span>
<span class="t" style="left:653.40px;top:509.20px;font-size:10.2px;line-height:13px;font-weight:400;color:#111;font-style:normal;transform:scaleX(0.9635);transform-origin:0 50%;">644473</span>
<span class="t" style="left:709.10px;top:509.20px;font-size:10.2px;line-height:13px;font-weight:400;color:#111;font-style:normal;transform:scaleX(0.9659);transform-origin:0 50%;">5733297</span>
<span class="t" style="left:207.80px;top:530.82px;font-size:10.2px;line-height:13px;font-weight:400;color:#111;font-style:normal;transform:scaleX(0.8745);transform-origin:0 50%;">7</span>
<span class="t" style="left:263.50px;top:530.82px;font-size:10.2px;line-height:13px;font-weight:400;color:#111;font-style:normal;transform:scaleX(0.9596);transform-origin:0 50%;">24252</span>
<span class="t" style="left:319.20px;top:530.82px;font-size:10.2px;line-height:13px;font-weight:400;color:#111;font-style:normal;transform:scaleX(0.9596);transform-origin:0 50%;">24249</span>
<span class="t" style="left:374.90px;top:530.82px;font-size:10.2px;line-height:13px;font-weight:400;color:#111;font-style:normal;">51G</span>
<span class="t" style="left:430.60px;top:530.82px;font-size:10.2px;line-height:13px;font-weight:400;color:#111;font-style:normal;transform:scaleX(0.9596);transform-origin:0 50%;">24249</span>
<span class="t" style="left:486.30px;top:530.82px;font-size:10.2px;line-height:13px;font-weight:400;color:#111;font-style:normal;transform:scaleX(0.9545);transform-origin:0 50%;">1526</span>
<span class="t" style="left:542.00px;top:530.82px;font-size:10.2px;line-height:13px;font-weight:400;color:#111;font-style:normal;transform:scaleX(0.9635);transform-origin:0 50%;">645715</span>
<span class="t" style="left:597.70px;top:530.82px;font-size:10.2px;line-height:13px;font-weight:400;color:#111;font-style:normal;transform:scaleX(0.9659);transform-origin:0 50%;">5733062</span>
<span class="t" style="left:653.40px;top:530.82px;font-size:10.2px;line-height:13px;font-weight:400;color:#111;font-style:normal;transform:scaleX(0.9635);transform-origin:0 50%;">645450</span>
<span class="t" style="left:709.10px;top:530.82px;font-size:10.2px;line-height:13px;font-weight:400;color:#111;font-style:normal;transform:scaleX(0.9659);transform-origin:0 50%;">5734004</span>
<span class="t" style="left:196.90px;top:360.50px;font-size:10.3px;line-height:13px;font-weight:400;color:#111;font-style:normal;transform:scaleX(0.9046);transform-origin:0 50%;">Open</span>
<span class="t" style="left:245.60px;top:360.50px;font-size:10.3px;line-height:13px;font-weight:400;color:#111;font-style:normal;transform:scaleX(0.8958);transform-origin:0 50%;">Edit</span>
<span class="t" style="left:286.60px;top:360.50px;font-size:10.3px;line-height:13px;font-weight:400;color:#111;font-style:normal;transform:scaleX(0.8970);transform-origin:0 50%;">Delete</span>
<span class="t" style="left:337.90px;top:360.50px;font-size:10.3px;line-height:13px;font-weight:400;color:#111;font-style:normal;transform:scaleX(0.9290);transform-origin:0 50%;">Go to</span>
</div></body></html>
